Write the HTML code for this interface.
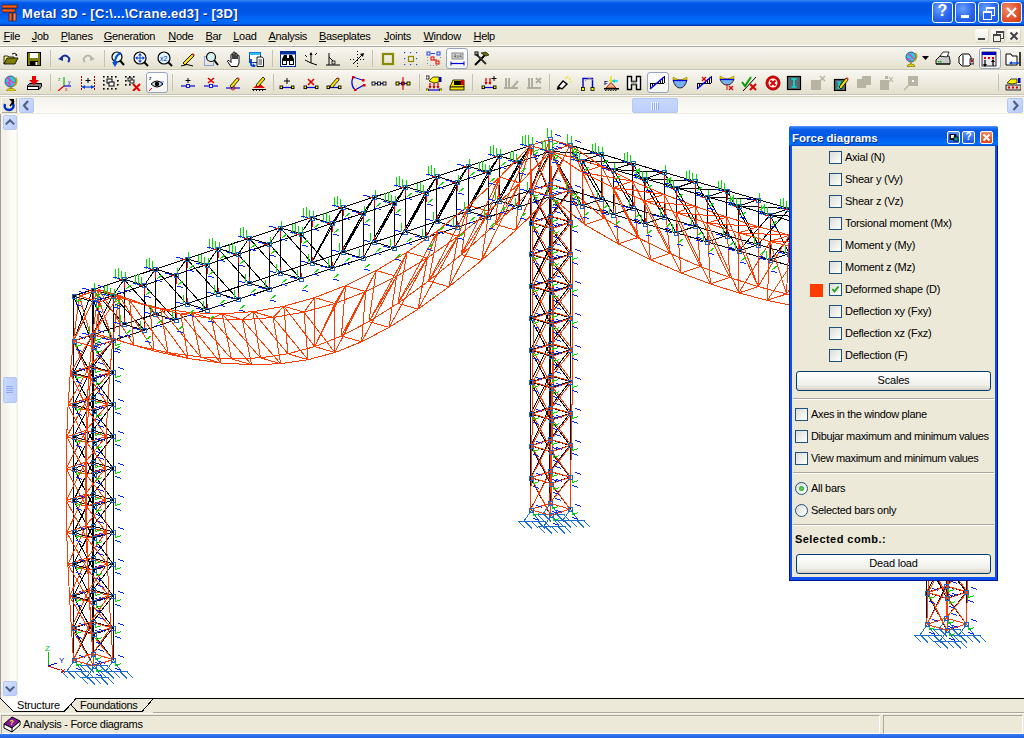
<!DOCTYPE html><html><head><meta charset="utf-8"><style>html,body{margin:0;padding:0;width:1024px;height:738px;overflow:hidden;background:#fff;position:relative}div,svg{box-sizing:content-box}</style></head><body><div style="position:absolute;left:0;top:0;width:1024px;height:26px;background:linear-gradient(#3d8af7 0px,#1a6ef2 1.5px,#0058e6 3px,#0054e3 8px,#0058e8 13px,#0062f2 17px,#006cfa 21px,#0064f2 23.5px,#0040c0 25px,#0030a0 26px)"></div><svg style="position:absolute;left:2px;top:4px" width="18" height="18" viewBox="0 0 18 18"><rect x="0" y="1" width="15" height="3" fill="#ff5a14" stroke="#2a1000" stroke-width="0.6"/><rect x="0" y="5" width="13" height="3" fill="#ff5a14" stroke="#2a1000" stroke-width="0.6"/><rect x="7" y="9" width="3" height="8" fill="#ff5a14" stroke="#2a1000" stroke-width="0.6"/><rect x="11" y="9" width="3" height="8" fill="#ff7a44" stroke="#2a1000" stroke-width="0.6"/></svg><div style="position:absolute;left:22px;top:6px;font:bold 13px 'Liberation Sans',sans-serif;letter-spacing:0.3px;color:#fff;text-shadow:1px 1px 0 #0a2a8a;white-space:nowrap">Metal 3D - [C:\...\Crane.ed3] - [3D]</div><div style="position:absolute;left:932px;top:2px;width:19px;height:19px;border:1px solid #fff;border-radius:3px;background:radial-gradient(circle at 35% 30%,#6aa0ff,#2a66ef 55%,#1a4fd8);overflow:hidden"><div style="position:absolute;left:0;top:-1px;width:19px;text-align:center;font:bold 16px 'Liberation Sans',sans-serif;color:#fff">?</div></div><div style="position:absolute;left:955px;top:2px;width:19px;height:19px;border:1px solid #fff;border-radius:3px;background:radial-gradient(circle at 35% 30%,#6aa0ff,#2a66ef 55%,#1a4fd8);overflow:hidden"><div style="position:absolute;left:5px;top:12px;width:8px;height:3px;background:#fff"></div></div><div style="position:absolute;left:978px;top:2px;width:19px;height:19px;border:1px solid #fff;border-radius:3px;background:radial-gradient(circle at 35% 30%,#6aa0ff,#2a66ef 55%,#1a4fd8);overflow:hidden"><div style="position:absolute;left:7px;top:4px;width:7px;height:6px;border:1px solid #fff;border-top-width:2px"></div><div style="position:absolute;left:4px;top:8px;width:7px;height:6px;border:1px solid #fff;border-top-width:2px;background:#2a66ef"></div></div><div style="position:absolute;left:1001px;top:2px;width:19px;height:19px;border:1px solid #fff;border-radius:3px;background:radial-gradient(circle at 30% 30%,#f08a6a,#e0502a 60%,#c83a10);overflow:hidden"><svg width="19" height="19" style="position:absolute;left:0;top:0"><path d="M5 5L14 14M14 5L5 14" stroke="#fff" stroke-width="2.2"/></svg></div><div style="position:absolute;left:0;top:26px;width:1024px;height:20px;background:#ece9d8"></div><div style="position:absolute;left:3.5px;top:30px;font:11px 'Liberation Sans',sans-serif;color:#000;white-space:nowrap;letter-spacing:-0.3px"><u style="text-decoration-thickness:1px;text-underline-offset:1px">F</u>ile</div><div style="position:absolute;left:31.75px;top:30px;font:11px 'Liberation Sans',sans-serif;color:#000;white-space:nowrap;letter-spacing:-0.3px"><u style="text-decoration-thickness:1px;text-underline-offset:1px">J</u>ob</div><div style="position:absolute;left:60.75px;top:30px;font:11px 'Liberation Sans',sans-serif;color:#000;white-space:nowrap;letter-spacing:-0.3px"><u style="text-decoration-thickness:1px;text-underline-offset:1px">P</u>lanes</div><div style="position:absolute;left:103.75px;top:30px;font:11px 'Liberation Sans',sans-serif;color:#000;white-space:nowrap;letter-spacing:-0.3px"><u style="text-decoration-thickness:1px;text-underline-offset:1px">G</u>eneration</div><div style="position:absolute;left:168.25px;top:30px;font:11px 'Liberation Sans',sans-serif;color:#000;white-space:nowrap;letter-spacing:-0.3px"><u style="text-decoration-thickness:1px;text-underline-offset:1px">N</u>ode</div><div style="position:absolute;left:205.5px;top:30px;font:11px 'Liberation Sans',sans-serif;color:#000;white-space:nowrap;letter-spacing:-0.3px"><u style="text-decoration-thickness:1px;text-underline-offset:1px">B</u>ar</div><div style="position:absolute;left:233.25px;top:30px;font:11px 'Liberation Sans',sans-serif;color:#000;white-space:nowrap;letter-spacing:-0.3px"><u style="text-decoration-thickness:1px;text-underline-offset:1px">L</u>oad</div><div style="position:absolute;left:268.5px;top:30px;font:11px 'Liberation Sans',sans-serif;color:#000;white-space:nowrap;letter-spacing:-0.3px"><u style="text-decoration-thickness:1px;text-underline-offset:1px">A</u>nalysis</div><div style="position:absolute;left:319px;top:30px;font:11px 'Liberation Sans',sans-serif;color:#000;white-space:nowrap;letter-spacing:-0.3px"><u style="text-decoration-thickness:1px;text-underline-offset:1px">B</u>aseplates</div><div style="position:absolute;left:384px;top:30px;font:11px 'Liberation Sans',sans-serif;color:#000;white-space:nowrap;letter-spacing:-0.3px"><u style="text-decoration-thickness:1px;text-underline-offset:1px">J</u>oints</div><div style="position:absolute;left:423.5px;top:30px;font:11px 'Liberation Sans',sans-serif;color:#000;white-space:nowrap;letter-spacing:-0.3px"><u style="text-decoration-thickness:1px;text-underline-offset:1px">W</u>indow</div><div style="position:absolute;left:473.5px;top:30px;font:11px 'Liberation Sans',sans-serif;color:#000;white-space:nowrap;letter-spacing:-0.3px"><u style="text-decoration-thickness:1px;text-underline-offset:1px">H</u>elp</div><div style="position:absolute;left:975px;top:29px;width:14px;height:14px;background:linear-gradient(#fdfdfb,#ece9dc);border-radius:2px;box-shadow:inset -1px -1px 0 #d8d4c4"><div style="position:absolute;left:3px;top:9px;width:7px;height:2px;background:#444"></div></div><div style="position:absolute;left:991px;top:29px;width:14px;height:14px;background:linear-gradient(#fdfdfb,#ece9dc);border-radius:2px;box-shadow:inset -1px -1px 0 #d8d4c4"><div style="position:absolute;left:5px;top:2px;width:6px;height:5px;border:1px solid #444;border-top-width:2px"></div><div style="position:absolute;left:2px;top:5px;width:6px;height:5px;border:1px solid #444;border-top-width:2px;background:#f2f0e8"></div></div><div style="position:absolute;left:1007px;top:29px;width:14px;height:14px;background:linear-gradient(#fdfdfb,#ece9dc);border-radius:2px;box-shadow:inset -1px -1px 0 #d8d4c4"><svg width="14" height="14" style="position:absolute;left:0;top:0"><path d="M3.5 3.5L10.5 10.5M10.5 3.5L3.5 10.5" stroke="#444" stroke-width="2"/></svg></div><div style="position:absolute;left:0;top:45px;width:1024px;height:1px;background:#fff"></div><div style="position:absolute;left:0;top:46px;width:1024px;height:1px;background:#aca899"></div><div style="position:absolute;left:0;top:47px;width:1024px;height:23px;background:linear-gradient(#f7f6f0,#ece9dc 60%,#e3dfcc)"></div><div style="position:absolute;left:0;top:71px;width:1024px;height:23px;background:linear-gradient(#f7f6f0,#ece9dc 60%,#e3dfcc)"></div><div style="position:absolute;left:0;top:69px;width:1024px;height:1px;background:#c9c5b4"></div><div style="position:absolute;left:0;top:70px;width:1024px;height:1px;background:#fbfaf6"></div><div style="position:absolute;left:0;top:94px;width:1024px;height:1px;background:#c9c5b4"></div><div style="position:absolute;left:0;top:95px;width:1024px;height:1px;background:#fbfaf6"></div><div style="position:absolute;left:0;top:96px;width:1024px;height:1px;background:#d6d2c2"></div><div style="position:absolute;left:446px;top:48px;width:20px;height:19px;border:1px solid #97a6be;border-radius:3px;background:linear-gradient(#ffffff,#f4f4f0)"></div><div style="position:absolute;left:979px;top:48px;width:20px;height:19px;border:1px solid #97a6be;border-radius:3px;background:linear-gradient(#ffffff,#f4f4f0)"></div><div style="position:absolute;left:146px;top:72px;width:20px;height:19px;border:1px solid #97a6be;border-radius:3px;background:linear-gradient(#ffffff,#f4f4f0)"></div><div style="position:absolute;left:647px;top:72px;width:20px;height:19px;border:1px solid #97a6be;border-radius:3px;background:linear-gradient(#ffffff,#f4f4f0)"></div><div style="position:absolute;left:50px;top:50px;width:1px;height:17px;background:#c5c2b2"></div><div style="position:absolute;left:104px;top:50px;width:1px;height:17px;background:#c5c2b2"></div><div style="position:absolute;left:272px;top:50px;width:1px;height:17px;background:#c5c2b2"></div><div style="position:absolute;left:372px;top:50px;width:1px;height:17px;background:#c5c2b2"></div><div style="position:absolute;left:50px;top:74px;width:1px;height:17px;background:#c5c2b2"></div><div style="position:absolute;left:172px;top:74px;width:1px;height:17px;background:#c5c2b2"></div><div style="position:absolute;left:273px;top:74px;width:1px;height:17px;background:#c5c2b2"></div><div style="position:absolute;left:419px;top:74px;width:1px;height:17px;background:#c5c2b2"></div><div style="position:absolute;left:472px;top:74px;width:1px;height:17px;background:#c5c2b2"></div><div style="position:absolute;left:549px;top:74px;width:1px;height:17px;background:#c5c2b2"></div><div style="position:absolute;left:998px;top:74px;width:1px;height:17px;background:#c5c2b2"></div><svg style="position:absolute;left:3px;top:51px" width="16" height="16" viewBox="0 0 16 16"><path d="M1 5h4l1 1h5v2H4L1 13z" fill="#f8f070" stroke="#000" stroke-width="0.8"/><path d="M1 13l3-6h11l-3 6z" fill="#808000" stroke="#000" stroke-width="0.8"/><path d="M9 3q3-2 5 1" stroke="#000" fill="none" stroke-width="1"/><path d="M13 2.5l1.5 2l-2 .5z" fill="#000"/></svg><svg style="position:absolute;left:26px;top:51px" width="16" height="16" viewBox="0 0 16 16"><rect x="1.5" y="1.5" width="13" height="13" fill="#808000" stroke="#000" stroke-width="1" /><rect x="4" y="2" width="8" height="5" fill="#fff" stroke="none" stroke-width="0" /><rect x="4" y="10" width="8" height="4.5" fill="#000" stroke="none" stroke-width="0" /><rect x="9.5" y="11" width="2" height="3" fill="#fff" stroke="none" stroke-width="0" /></svg><svg style="position:absolute;left:57px;top:51px" width="16" height="16" viewBox="0 0 16 16"><path d="M4 7q4-5 8 0q1 2-1 4" stroke="#1030a0" stroke-width="2" fill="none"/><path d="M1 8l5-3l0 5z" fill="#1030a0"/></svg><svg style="position:absolute;left:80px;top:51px" width="16" height="16" viewBox="0 0 16 16"><path d="M12 7q-4-5-8 0q-1 2 1 4" stroke="#b8b6aa" stroke-width="2" fill="none"/><path d="M15 8l-5-3l0 5z" fill="#b8b6aa"/></svg><svg style="position:absolute;left:109px;top:51px" width="16" height="16" viewBox="0 0 16 16"><circle cx="8" cy="6" r="5" fill="#e8f8f8" stroke="#000" stroke-width="1.2"/><path d="M11 9.5L15 14" stroke="#000" stroke-width="2" /><path d="M12 2q-6 2-6 10" stroke="#0050e0" stroke-width="2" fill="none"/><path d="M3 11l3 5l3-5z" fill="#0050e0"/></svg><svg style="position:absolute;left:133px;top:51px" width="16" height="16" viewBox="0 0 16 16"><circle cx="7" cy="7" r="6" fill="#fff" stroke="#000" stroke-width="1.2"/><path d="M11 11L15 15" stroke="#000" stroke-width="2" /><path d="M7 2l2 2.5h-4zM7 12l2-2.5h-4zM2 7l2.5-2v4zM12 7l-2.5-2v4z" fill="#0040e0"/><path d="M7 4L7 10" stroke="#0040e0" stroke-width="1" /><path d="M4 7L10 7" stroke="#0040e0" stroke-width="1" /></svg><svg style="position:absolute;left:157px;top:51px" width="16" height="16" viewBox="0 0 16 16"><circle cx="7" cy="7" r="6" fill="#e0f4ff" stroke="#000" stroke-width="1.2"/><path d="M11 11L15 15" stroke="#000" stroke-width="2" /><text x="3" y="10" font-size="7" font-family="Liberation Sans" fill="#0030c0">x2</text></svg><svg style="position:absolute;left:180px;top:51px" width="16" height="16" viewBox="0 0 16 16"><path d="M3 12L12 3l2 2l-9 9z" fill="#f8e000" stroke="#000" stroke-width="0.9"/><path d="M12 3l2 2l1-1l-2-2z" fill="#e04040"/><path d="M1 15q6-3 12 0" stroke="#000" fill="none" stroke-width="1"/></svg><svg style="position:absolute;left:203px;top:51px" width="16" height="16" viewBox="0 0 16 16"><rect x="1.5" y="5.5" width="9" height="9" fill="none" stroke="#2060e0" stroke-width="1" stroke-dasharray="1,1"/><circle cx="8" cy="6" r="4.5" fill="#d8f0f0" stroke="#000" stroke-width="1.2"/><path d="M11 9L15 14" stroke="#000" stroke-width="2" /></svg><svg style="position:absolute;left:226px;top:51px" width="16" height="16" viewBox="0 0 16 16"><path d="M5 15.5L1.5 10.5q0-1.5 1.5-1L5 11.5V4q0-1 1-1t1 1v4V2q0-1 1-1t1 1v6V3q0-1 1-1t1 1v5V5q0-1 1-1t1 1v7l-1.5 3.5z" fill="#fff" stroke="#000" stroke-width="1" stroke-linejoin="round"/></svg><svg style="position:absolute;left:248px;top:51px" width="16" height="16" viewBox="0 0 16 16"><rect x="1.5" y="1.5" width="11" height="10" fill="#fff" stroke="#0040c0" stroke-width="1" /><rect x="1.5" y="1.5" width="11" height="2.5" fill="#30c0f0" stroke="none" stroke-width="0" /><path d="M9 6h5l1.5 1.5v8h-6.5z" fill="#fff" stroke="#000" stroke-width="0.9"/><path d="M10.5 9h3.5M10.5 11h3.5M10.5 13h3.5" stroke="#000" stroke-width="0.8"/><path d="M3 8v5q0 2 3 2" stroke="#0040d0" stroke-width="1.8" fill="none"/><path d="M5 12.5l3 2.5l-3 2z" fill="#0040d0"/></svg><svg style="position:absolute;left:280px;top:51px" width="16" height="16" viewBox="0 0 16 16"><rect x="0.5" y="0.5" width="15" height="15" fill="#fff" stroke="#0030a0" stroke-width="1" /><rect x="0.5" y="0.5" width="15" height="3" fill="#0030a0" stroke="none" stroke-width="0" /><path d="M2 14V8l2-4h3v10zM14 14V8l-2-4H9v10z" fill="#000"/><rect x="3" y="10" width="3" height="3" fill="#fff" stroke="none" stroke-width="0" /><rect x="10" y="10" width="3" height="3" fill="#fff" stroke="none" stroke-width="0" /><rect x="7" y="7" width="2" height="3" fill="#000" stroke="none" stroke-width="0" /></svg><svg style="position:absolute;left:303px;top:51px" width="16" height="16" viewBox="0 0 16 16"><path d="M8 2L8 12" stroke="#000" stroke-width="1" /><path d="M8 12L14 14" stroke="#000" stroke-width="1" /><path d="M8 12L2 9" stroke="#000" stroke-width="1" /><path d="M8 1l-1.5 3h3z" fill="#000"/><path d="M2 4L4 6" stroke="#000" stroke-width="1" /><path d="M12 4L14 2" stroke="#000" stroke-width="1" /></svg><svg style="position:absolute;left:325px;top:51px" width="16" height="16" viewBox="0 0 16 16"><path d="M4 2L4 14" stroke="#000" stroke-width="1" /><path d="M1 14L15 14" stroke="#000" stroke-width="1" /><path d="M4 6L8 10" stroke="#000" stroke-width="1" /><rect x="7" y="10" width="3" height="3" fill="none" stroke="#000" stroke-width="0.8" /></svg><svg style="position:absolute;left:349.5px;top:51px" width="16" height="16" viewBox="0 0 16 16"><path d="M3 13L13 3" stroke="#000" stroke-width="1" /><path d="M14 2l-4 1l3 3z" fill="#000"/><rect x="7" y="0" width="1" height="1" fill="#000"/><rect x="7" y="3" width="1" height="1" fill="#000"/><rect x="7" y="6" width="1" height="1" fill="#000"/><rect x="7" y="9" width="1" height="1" fill="#000"/><rect x="7" y="12" width="1" height="1" fill="#000"/><rect x="7" y="15" width="1" height="1" fill="#000"/><rect x="0" y="8" width="1" height="1" fill="#000"/><rect x="3" y="8" width="1" height="1" fill="#000"/><rect x="10" y="8" width="1" height="1" fill="#000"/><rect x="13" y="8" width="1" height="1" fill="#000"/></svg><svg style="position:absolute;left:380px;top:51px" width="16" height="16" viewBox="0 0 16 16"><rect x="3" y="3" width="10" height="10" fill="none" stroke="#8a8a00" stroke-width="2.2" /></svg><svg style="position:absolute;left:403px;top:51px" width="16" height="16" viewBox="0 0 16 16"><rect x="5.5" y="5.5" width="5" height="5" fill="none" stroke="#8a8a00" stroke-width="1.2" /><rect x="1" y="1" width="1.2" height="1.2" fill="#2050d0"/><rect x="7" y="1" width="1.2" height="1.2" fill="#2050d0"/><rect x="13" y="1" width="1.2" height="1.2" fill="#2050d0"/><rect x="1" y="7" width="1.2" height="1.2" fill="#2050d0"/><rect x="13" y="7" width="1.2" height="1.2" fill="#2050d0"/><rect x="1" y="13" width="1.2" height="1.2" fill="#2050d0"/><rect x="7" y="13" width="1.2" height="1.2" fill="#2050d0"/><rect x="13" y="13" width="1.2" height="1.2" fill="#2050d0"/></svg><svg style="position:absolute;left:426px;top:51px" width="16" height="16" viewBox="0 0 16 16"><rect x="1" y="1" width="3" height="3" fill="none" stroke="#2040e0" stroke-width="1" /><path d="M5 2.5L9 2.5" stroke="#2040e0" stroke-width="1" /><rect x="11" y="1" width="3" height="3" fill="none" stroke="#2040e0" stroke-width="1" /><rect x="5" y="6" width="3" height="3" fill="none" stroke="#e00000" stroke-width="1" /><path d="M8 9L11 9" stroke="#e00000" stroke-width="1" /><rect x="10" y="10" width="3" height="3" fill="none" stroke="#e00000" stroke-width="1" /><rect x="1" y="6" width="1" height="1" fill="#888"/><rect x="1" y="9" width="1" height="1" fill="#888"/><rect x="1" y="12" width="1" height="1" fill="#888"/><rect x="4" y="14" width="1" height="1" fill="#888"/><rect x="7" y="14" width="1" height="1" fill="#888"/><rect x="10" y="14" width="1" height="1" fill="#888"/><rect x="14" y="6" width="1" height="1" fill="#888"/></svg><svg style="position:absolute;left:449px;top:51px" width="16" height="16" viewBox="0 0 16 16"><rect x="3" y="2" width="11" height="6" fill="#d8d8d8" stroke="#888" stroke-width="1" /><text x="4.5" y="7" font-size="4.5" font-family="Liberation Mono" fill="#333">4x4</text><path d="M2 12.5L15 12.5" stroke="#0000d0" stroke-width="1.2" /><path d="M2 10.5L2 14.5" stroke="#0000d0" stroke-width="1" /><path d="M15 10.5L15 14.5" stroke="#0000d0" stroke-width="1" /></svg><svg style="position:absolute;left:473px;top:51px" width="16" height="16" viewBox="0 0 16 16"><path d="M2 14L12 4" stroke="#000" stroke-width="2" /><path d="M8 2l5-1l3 3l-3 1z" fill="#707000" stroke="#000" stroke-width="0.6"/><path d="M3 3L13 13" stroke="#303030" stroke-width="2" /><rect x="2" y="1" width="3" height="3" fill="none" stroke="#000" stroke-width="1" /></svg><svg style="position:absolute;left:904px;top:51px" width="16" height="16" viewBox="0 0 16 16"><circle cx="7" cy="6" r="5" fill="#30c8d8" stroke="#204080" stroke-width="0.8"/><path d="M4 3q3 1 4 3t3 2M3 8q2-1 4 2" stroke="#e040c0" stroke-width="1.5" fill="none"/><path d="M11.5 2q3 4-1 8" stroke="#c0a800" stroke-width="1.5" fill="none"/><path d="M7 11L7 13" stroke="#a09000" stroke-width="1.5" /><path d="M3 15.5q0-2.5 4-2.5t4 2.5z" fill="#e8d800" stroke="#706000" stroke-width="0.6"/></svg><svg style="position:absolute;left:935px;top:51px" width="16" height="16" viewBox="0 0 16 16"><path d="M1 9l4-4h9l1 4v4H1z" fill="#c8c8c8" stroke="#000" stroke-width="0.9"/><path d="M5 5l3-4h6l-2 5z" fill="#fff" stroke="#000" stroke-width="0.8"/><rect x="3" y="10" width="1.5" height="1.5" fill="#00c000"/><rect x="5" y="10" width="1.5" height="1.5" fill="#00c000"/><path d="M1 13L15 13" stroke="#000" stroke-width="1" /></svg><svg style="position:absolute;left:957.5px;top:51px" width="16" height="16" viewBox="0 0 16 16"><path d="M1 6l3-3h7l2 3v7l-2 2H4l-3-3z" fill="#fff" stroke="#000" stroke-width="1"/><rect x="12" y="8" width="4" height="5" fill="#c0c0c0" stroke="#000" stroke-width="0.8" /><path d="M5 4L5 14" stroke="#000" stroke-width="1" /><rect x="13" y="9" width="2" height="2" fill="#e00000" stroke="none" stroke-width="0" /></svg><svg style="position:absolute;left:981px;top:51px" width="16" height="16" viewBox="0 0 16 16"><rect x="1" y="1" width="14" height="14" fill="#e8e8f0" stroke="#000" stroke-width="0.8" /><rect x="1" y="1" width="14" height="3" fill="#0000c0" stroke="none" stroke-width="0" /><rect x="3" y="6" width="2" height="2" fill="#e00000"/><rect x="7" y="6" width="2" height="2" fill="#e00000"/><rect x="11" y="6" width="2" height="2" fill="#e00000"/><path d="M4 9v6M12 9v6" stroke="#000" stroke-width="1.2"/><path d="M2 13l2 3l2-3zM10 11l2-3l2 3z" fill="#000"/></svg><svg style="position:absolute;left:1005px;top:51px" width="16" height="16" viewBox="0 0 16 16"><path d="M1 3h5l1 2h5v9H1z" fill="#fff" stroke="#000" stroke-width="1"/><path d="M15 1L15 15" stroke="#000" stroke-width="1.5" /><path d="M5 12L14 12" stroke="#0040e0" stroke-width="1.3" /><path d="M4 12l3-2v4z" fill="#0040e0"/></svg><svg style="position:absolute;left:3px;top:74.5px" width="16" height="16" viewBox="0 0 16 16"><circle cx="7.5" cy="6.5" r="5.5" fill="#30c8d8" stroke="#204080" stroke-width="0.8"/><path d="M4 3q3 1 4 3t4 2M3 8q2-1 5 2M6 2q1 4 0 9" stroke="#e040c0" stroke-width="1.6" fill="none"/><path d="M12.5 2.5q3 4-1 8.5" stroke="#c0a800" stroke-width="1.6" fill="none"/><path d="M8 12L8 14" stroke="#a09000" stroke-width="1.6" /><path d="M3.5 16q0-2.5 4.5-2.5t4.5 2.5z" fill="#e8d800" stroke="#706000" stroke-width="0.6"/></svg><svg style="position:absolute;left:26px;top:74.5px" width="16" height="16" viewBox="0 0 16 16"><path d="M1.5 10.5l2-2h12v3l-2 2.5h-12z" fill="#808080" stroke="#000" stroke-width="1"/><rect x="1.5" y="11.5" width="11" height="3" fill="#fff" stroke="#000" stroke-width="1" /><path d="M6 1h4v4h3l-5 5l-5-5h3z" fill="#f00000"/></svg><svg style="position:absolute;left:57px;top:74.5px" width="16" height="16" viewBox="0 0 16 16"><path d="M7 2L7 11" stroke="#00c000" stroke-width="1.2" /><path d="M7 11L14 11" stroke="#0000e0" stroke-width="1.2" /><path d="M7 11L1 16" stroke="#e00000" stroke-width="1.2" /><text x="1" y="6" font-size="5" fill="#00c000" font-family="Liberation Sans">z</text><text x="11" y="9" font-size="5" fill="#0000e0" font-family="Liberation Sans">y</text><text x="8" y="16" font-size="5" fill="#e00000" font-family="Liberation Sans">x</text></svg><svg style="position:absolute;left:80px;top:74.5px" width="16" height="16" viewBox="0 0 16 16"><path d="M1.5 1L1.5 16" stroke="#a00000" stroke-width="1" stroke-dasharray="2,1"/><path d="M14.5 1L14.5 16" stroke="#a00000" stroke-width="1" stroke-dasharray="2,1"/><path d="M2 12L14 12" stroke="#0040e0" stroke-width="1.2" /><path d="M2 12l3-2v4zM14 12l-3-2v4z" fill="#0040e0"/><path d="M8 3L8 8" stroke="#000" stroke-width="1" /><path d="M5.5 5.5L10.5 5.5" stroke="#000" stroke-width="1" /></svg><svg style="position:absolute;left:103px;top:74.5px" width="16" height="16" viewBox="0 0 16 16"><rect x="0" y="1" width="1.6" height="1.6" fill="#000"/><rect x="4" y="1" width="1.6" height="1.6" fill="#000"/><rect x="8" y="1" width="1.6" height="1.6" fill="#000"/><rect x="12" y="1" width="1.6" height="1.6" fill="#000"/><rect x="0" y="5" width="1.6" height="1.6" fill="#000"/><rect x="0" y="9" width="1.6" height="1.6" fill="#000"/><rect x="0" y="13" width="1.6" height="1.6" fill="#000"/><rect x="4" y="13" width="1.6" height="1.6" fill="#000"/><rect x="8" y="13" width="1.6" height="1.6" fill="#000"/><rect x="12" y="13" width="1.6" height="1.6" fill="#000"/><rect x="14" y="5" width="1.6" height="1.6" fill="#000"/><rect x="14" y="9" width="1.6" height="1.6" fill="#000"/><rect x="4" y="4" width="5" height="4" fill="#fff" stroke="#000" stroke-width="1" /><rect x="6" y="7" width="5" height="4" fill="#fff" stroke="#000" stroke-width="1" /></svg><svg style="position:absolute;left:125px;top:74.5px" width="16" height="16" viewBox="0 0 16 16"><rect x="0" y="1" width="1.6" height="1.6" fill="#000"/><rect x="4" y="1" width="1.6" height="1.6" fill="#000"/><rect x="8" y="1" width="1.6" height="1.6" fill="#000"/><rect x="0" y="5" width="1.6" height="1.6" fill="#000"/><rect x="0" y="9" width="1.6" height="1.6" fill="#000"/><rect x="4" y="9" width="1.6" height="1.6" fill="#000"/><rect x="3" y="3" width="4" height="3" fill="#fff" stroke="#000" stroke-width="0.9" /><rect x="5" y="5" width="4" height="3" fill="#fff" stroke="#000" stroke-width="0.9" /><path d="M8 9L15 16" stroke="#e00000" stroke-width="2" /><path d="M15 9L8 16" stroke="#e00000" stroke-width="2" /></svg><svg style="position:absolute;left:149px;top:74.5px" width="16" height="16" viewBox="0 0 16 16"><path d="M2 9q6-6 12 0q-6 6-12 0z" fill="#c0e0e0" stroke="#000" stroke-width="1"/><circle cx="8" cy="9" r="2.2" fill="#000"/><text x="0" y="5" font-size="5" font-family="Liberation Sans" fill="#000">z</text><text x="12" y="9" font-size="5" font-family="Liberation Sans" fill="#0000e0">y</text><path d="M3 13L0 16" stroke="#e00000" stroke-width="1" /></svg><svg style="position:absolute;left:180px;top:74.5px" width="16" height="16" viewBox="0 0 16 16"><path d="M1 11L15 11" stroke="#0000e0" stroke-width="1.2" /><rect x="6.5" y="9.5" width="3" height="3" fill="#fff" stroke="#0000e0" stroke-width="0.9" /><path d="M8 3L8 8" stroke="#000" stroke-width="1" /><path d="M5.5 5.5L10.5 5.5" stroke="#000" stroke-width="1" /></svg><svg style="position:absolute;left:203px;top:74.5px" width="16" height="16" viewBox="0 0 16 16"><path d="M1 11L15 11" stroke="#0000e0" stroke-width="1.2" /><rect x="6.5" y="9.5" width="3" height="3" fill="#fff" stroke="#0000e0" stroke-width="0.9" /><path d="M5 3L11 8" stroke="#e00000" stroke-width="1.6" /><path d="M11 3L5 8" stroke="#e00000" stroke-width="1.6" /></svg><svg style="position:absolute;left:225px;top:74.5px" width="16" height="16" viewBox="0 0 16 16"><path d="M1 13L15 13" stroke="#0000e0" stroke-width="1.2" /><circle cx="8" cy="13" r="2" fill="none" stroke="#e00000"/><path d="M5 11l7-8l2 2l-7 8z" fill="#f8e000" stroke="#000" stroke-width="0.8"/><path d="M12 3l2 2l1-1l-2-2z" fill="#e04040"/></svg><svg style="position:absolute;left:251px;top:74.5px" width="16" height="16" viewBox="0 0 16 16"><path d="M2 13l6-5l6 5z" fill="#f00000"/><path d="M1 14.5L15 14.5" stroke="#000" stroke-width="1" /><path d="M5 10l7-8l2 2l-7 8z" fill="#f8e000" stroke="#000" stroke-width="0.8"/><rect x="2" y="15" width="1" height="1" fill="#000"/><rect x="5" y="15" width="1" height="1" fill="#000"/><rect x="8" y="15" width="1" height="1" fill="#000"/><rect x="11" y="15" width="1" height="1" fill="#000"/></svg><svg style="position:absolute;left:279px;top:74.5px" width="16" height="16" viewBox="0 0 16 16"><path d="M2 12.5L14 12.5" stroke="#0000e0" stroke-width="1.2" /><rect x="1" y="11" width="2.6" height="2.6" fill="#ff0" stroke="#000" stroke-width="0.9" /><rect x="12.4" y="11" width="2.6" height="2.6" fill="#ff0" stroke="#000" stroke-width="0.9" /><path d="M8 3L8 9" stroke="#000" stroke-width="1" /><path d="M5 6L11 6" stroke="#000" stroke-width="1" /></svg><svg style="position:absolute;left:303px;top:74.5px" width="16" height="16" viewBox="0 0 16 16"><path d="M2 12.5L14 12.5" stroke="#0000e0" stroke-width="1.2" /><rect x="1" y="11" width="2.6" height="2.6" fill="#ff0" stroke="#000" stroke-width="0.9" /><rect x="12.4" y="11" width="2.6" height="2.6" fill="#ff0" stroke="#000" stroke-width="0.9" /><path d="M5 4L11 10" stroke="#e00000" stroke-width="1.6" /><path d="M11 4L5 10" stroke="#e00000" stroke-width="1.6" /></svg><svg style="position:absolute;left:326px;top:74.5px" width="16" height="16" viewBox="0 0 16 16"><path d="M2 12.5L14 12.5" stroke="#0000e0" stroke-width="1.2" /><rect x="1" y="11" width="2.6" height="2.6" fill="#ff0" stroke="#000" stroke-width="0.9" /><rect x="12.4" y="11" width="2.6" height="2.6" fill="#ff0" stroke="#000" stroke-width="0.9" /><path d="M4 11l7-8l2 2l-7 8z" fill="#f8e000" stroke="#000" stroke-width="0.8"/><path d="M11 3l2 2l1-1l-2-2z" fill="#e04040"/></svg><svg style="position:absolute;left:349.5px;top:74.5px" width="16" height="16" viewBox="0 0 16 16"><path d="M3 2q-3 8 2 13" stroke="#0000e0" fill="none" stroke-width="1.2"/><path d="M5 15L14 10" stroke="#0000e0" stroke-width="1.2" /><path d="M3 2L12 5" stroke="#0000e0" stroke-width="1" /><rect x="2" y="1" width="2.5" height="2.5" fill="#e00000" stroke="none" stroke-width="0" /><rect x="12" y="4" width="2.5" height="2.5" fill="#e00000" stroke="none" stroke-width="0" /><rect x="4" y="14" width="2.5" height="2.5" fill="#e00000" stroke="none" stroke-width="0" /><rect x="13" y="9" width="2.5" height="2.5" fill="#e00000" stroke="none" stroke-width="0" /></svg><svg style="position:absolute;left:371px;top:74.5px" width="16" height="16" viewBox="0 0 16 16"><path d="M1 8.5L15 8.5" stroke="#0000e0" stroke-width="1.2" /><rect x="1" y="7" width="3" height="3" fill="#fff" stroke="#000" stroke-width="0.9" /><rect x="6.5" y="7" width="3" height="3" fill="#fff" stroke="#000" stroke-width="0.9" /><rect x="12" y="7" width="3" height="3" fill="#fff" stroke="#000" stroke-width="0.9" /></svg><svg style="position:absolute;left:395px;top:74.5px" width="16" height="16" viewBox="0 0 16 16"><path d="M1 8.5L15 8.5" stroke="#0000e0" stroke-width="1.2" /><path d="M8 2L8 15" stroke="#e00000" stroke-width="1.2" /><rect x="1" y="7" width="3" height="3" fill="#ff0" stroke="#000" stroke-width="0.9" /><rect x="12" y="7" width="3" height="3" fill="#ff0" stroke="#000" stroke-width="0.9" /><rect x="6.5" y="7" width="3" height="3" fill="#e00000" stroke="#000" stroke-width="0.6" /></svg><svg style="position:absolute;left:426px;top:74.5px" width="16" height="16" viewBox="0 0 16 16"><path d="M3 6l4-4h6v5l-5 1z" fill="#f8f000" stroke="#000" stroke-width="0.7"/><rect x="13" y="2" width="2.5" height="5" fill="#0000c0" stroke="none" stroke-width="0" /><path d="M1 15L15 15" stroke="#0000e0" stroke-width="1.2" /><path d="M4 8v5M8 8v5M12 8v5" stroke="#e00000" stroke-width="1.3"/><path d="M2.5 11l1.5 3l1.5-3zM6.5 11l1.5 3l1.5-3zM10.5 11l1.5 3l1.5-3z" fill="#e00000"/><rect x="0" y="14" width="2.5" height="2.5" fill="#ff0" stroke="#000" stroke-width="0.7" /><rect x="13.5" y="14" width="2.5" height="2.5" fill="#ff0" stroke="#000" stroke-width="0.7" /><rect x="0" y="1" width="3" height="3" fill="#fff" stroke="#000" stroke-width="0.8" /></svg><svg style="position:absolute;left:449px;top:74.5px" width="16" height="16" viewBox="0 0 16 16"><path d="M1 12l3-7h11v7z" fill="#f0e000" stroke="#000" stroke-width="0.8"/><rect x="1" y="12" width="14" height="3" fill="#f0e000" stroke="#000" stroke-width="0.8" /><rect x="5" y="6" width="9" height="4" fill="#000" stroke="none" stroke-width="0" /><rect x="12" y="5" width="3" height="5" fill="#e00000" stroke="none" stroke-width="0" /></svg><svg style="position:absolute;left:481px;top:74.5px" width="16" height="16" viewBox="0 0 16 16"><path d="M2 12.5L14 12.5" stroke="#0000e0" stroke-width="1.2" /><rect x="1" y="11" width="2.6" height="2.6" fill="#ff0" stroke="#000" stroke-width="0.9" /><rect x="12.4" y="11" width="2.6" height="2.6" fill="#ff0" stroke="#000" stroke-width="0.9" /><path d="M5 3v6M9 3v6" stroke="#e00000" stroke-width="1.3"/><path d="M3.5 7l1.5 3l1.5-3zM7.5 7l1.5 3l1.5-3z" fill="#e00000"/><path d="M13 1L13 6" stroke="#000" stroke-width="1" /><path d="M10.5 3.5L15.5 3.5" stroke="#000" stroke-width="1" /></svg><svg style="position:absolute;left:503px;top:74.5px" width="16" height="16" viewBox="0 0 16 16"><path d="M1 13h14M3 13V3M6 13V3M9 13l6-7" stroke="#b0ae9f" stroke-width="2" fill="none"/></svg><svg style="position:absolute;left:526px;top:74.5px" width="16" height="16" viewBox="0 0 16 16"><path d="M1 13h14M3 13V3M6 13V3M10 3l5 5M15 3l-5 5" stroke="#b0ae9f" stroke-width="2" fill="none"/></svg><svg style="position:absolute;left:556px;top:74.5px" width="16" height="16" viewBox="0 0 16 16"><path d="M2 12l5-6l4 3l-5 5z" fill="#fff" stroke="#000" stroke-width="1.4"/><path d="M1 14L4 13" stroke="#000" stroke-width="2" /><rect x="11" y="1" width="1.5" height="1.5" fill="#f0e000"/><rect x="13" y="3" width="1.5" height="1.5" fill="#f0e000"/><rect x="14" y="6" width="1.5" height="1.5" fill="#f0e000"/><rect x="9" y="2" width="1.5" height="1.5" fill="#f0e000"/></svg><svg style="position:absolute;left:579.5px;top:74.5px" width="16" height="16" viewBox="0 0 16 16"><path d="M3 14V3.5h9.5V14" stroke="#0000d0" stroke-width="1.4" fill="none"/><path d="M5 6q4-4 8-1" stroke="#999" fill="none"/><rect x="1.5" y="12.5" width="3" height="3" fill="#ff0" stroke="#000" stroke-width="0.8" /><rect x="11" y="12.5" width="3" height="3" fill="#ff0" stroke="#000" stroke-width="0.8" /></svg><svg style="position:absolute;left:603px;top:74.5px" width="16" height="16" viewBox="0 0 16 16"><path d="M3 13l5-5.5l5 5.5z" fill="#f0b080" stroke="#800000" stroke-width="0.8"/><rect x="1" y="13" width="15" height="1.5" fill="#000" stroke="none" stroke-width="0" /><path d="M2.0 16L4.0 14.5" stroke="#000" stroke-width="0.9" /><path d="M4.5 16L6.5 14.5" stroke="#000" stroke-width="0.9" /><path d="M7.0 16L9.0 14.5" stroke="#000" stroke-width="0.9" /><path d="M9.5 16L11.5 14.5" stroke="#000" stroke-width="0.9" /><path d="M12.0 16L14.0 14.5" stroke="#000" stroke-width="0.9" /><path d="M9 6L15 6" stroke="#00d0f0" stroke-width="1.4" /><path d="M9 6l3-2v4z" fill="#00d0f0"/><path d="M8 1v5" stroke="#f0e000" stroke-width="1.5"/><path d="M6 5l2 3l2-3z" fill="#f0e000"/><text x="1" y="10" font-size="6" font-weight="bold" font-family="Liberation Sans" fill="#000080">F</text></svg><svg style="position:absolute;left:626px;top:74.5px" width="16" height="16" viewBox="0 0 16 16"><path d="M1.5 1.5h4v5h5v-5h4v13h-4v-5h-5v5h-4z" fill="#fff" stroke="#000" stroke-width="1.4"/><rect x="5.5" y="6.5" width="5" height="3" fill="#a0a0a0" stroke="none" stroke-width="0" /></svg><svg style="position:absolute;left:649px;top:74.5px" width="16" height="16" viewBox="0 0 16 16"><path d="M1.5 8L1.5 13.16" stroke="#000" stroke-width="1" /><path d="M3.5 8L3.5 11.44" stroke="#000" stroke-width="1" /><path d="M5.5 8L5.5 9.72" stroke="#000" stroke-width="1" /><path d="M7.5 8L7.5 8.0" stroke="#000" stroke-width="1" /><path d="M9.5 8L9.5 6.28" stroke="#000" stroke-width="1" /><path d="M11.5 8L11.5 4.5600000000000005" stroke="#000" stroke-width="1" /><path d="M13.5 8L13.5 2.84" stroke="#000" stroke-width="1" /><path d="M15.5 8L15.5 1.12" stroke="#000" stroke-width="1" /><path d="M1 8.5L15 8.5" stroke="#000" stroke-width="1" /><path d="M1 14L15 2" stroke="#0000e0" stroke-width="1.4" /></svg><svg style="position:absolute;left:672px;top:74.5px" width="16" height="16" viewBox="0 0 16 16"><path d="M1 5h14q-2 8-7 8t-7-8z" fill="#78b0f0" stroke="#000" stroke-width="0.8"/><path d="M1 2l6 3H1zM15 2l-6 3h6z" fill="#f0e000" stroke="#806000" stroke-width="0.5"/><path d="M1 5.5L15 5.5" stroke="#0000e0" stroke-width="1.2" /></svg><svg style="position:absolute;left:696px;top:74.5px" width="16" height="16" viewBox="0 0 16 16"><path d="M1.5 8L1.5 13.16" stroke="#000" stroke-width="1" /><path d="M3.5 8L3.5 11.44" stroke="#000" stroke-width="1" /><path d="M5.5 8L5.5 9.72" stroke="#000" stroke-width="1" /><path d="M7.5 8L7.5 8.0" stroke="#000" stroke-width="1" /><path d="M9.5 8L9.5 6.28" stroke="#000" stroke-width="1" /><path d="M11.5 8L11.5 4.5600000000000005" stroke="#000" stroke-width="1" /><path d="M13.5 8L13.5 2.84" stroke="#000" stroke-width="1" /><path d="M15.5 8L15.5 1.12" stroke="#000" stroke-width="1" /><path d="M1 8.5L15 8.5" stroke="#000" stroke-width="1" /><path d="M1 14L15 2" stroke="#0000e0" stroke-width="1.4" /><path d="M6 2L10 6" stroke="#e00000" stroke-width="1.3" /><path d="M10 2L6 6" stroke="#e00000" stroke-width="1.3" /></svg><svg style="position:absolute;left:719px;top:74.5px" width="16" height="16" viewBox="0 0 16 16"><path d="M1 4h14q-2 6-7 6t-7-6z" fill="#78b0f0" stroke="#000" stroke-width="0.8"/><path d="M1 1l6 3H1zM15 1l-6 3h6z" fill="#f0e000" stroke="#806000" stroke-width="0.5"/><path d="M1 4.5L15 4.5" stroke="#0000e0" stroke-width="1.2" /><path d="M8 9L8 15" stroke="#e00000" stroke-width="1" /><path d="M10 11L14 15" stroke="#e00000" stroke-width="1.2" /><path d="M14 11L10 15" stroke="#e00000" stroke-width="1.2" /></svg><svg style="position:absolute;left:741px;top:74.5px" width="16" height="16" viewBox="0 0 16 16"><path d="M1 7l3 4l6-9" stroke="#00a000" stroke-width="2" fill="none"/><path d="M2 16L15 2" stroke="#000" stroke-width="1" /><path d="M9 9L15 15" stroke="#e00000" stroke-width="2" /><path d="M15 9L9 15" stroke="#e00000" stroke-width="2" /></svg><svg style="position:absolute;left:764.5px;top:74.5px" width="16" height="16" viewBox="0 0 16 16"><circle cx="8" cy="8" r="7" fill="#e00000" stroke="#a00000" stroke-width="1"/><circle cx="8" cy="8" r="4.5" fill="#fff"/><path d="M5.5 5.5l5 5M10.5 5.5l-5 5" stroke="#e00000" stroke-width="2"/></svg><svg style="position:absolute;left:786px;top:74.5px" width="16" height="16" viewBox="0 0 16 16"><rect x="1.5" y="1.5" width="13" height="13" fill="#5a6a6a" stroke="#000" stroke-width="1.2" /><path d="M8 4L8 12" stroke="#00e8e8" stroke-width="1.6" /><path d="M5.5 4L10.5 4" stroke="#00e8e8" stroke-width="1.4" /><path d="M5.5 12L10.5 12" stroke="#00e8e8" stroke-width="1.4" /></svg><svg style="position:absolute;left:810px;top:74.5px" width="16" height="16" viewBox="0 0 16 16"><rect x="1" y="5" width="10" height="10" fill="#b8b4a4" stroke="none" stroke-width="0" /><path d="M10 1L15 6" stroke="#b8b4a4" stroke-width="1.5" /><path d="M15 1L10 6" stroke="#b8b4a4" stroke-width="1.5" /></svg><svg style="position:absolute;left:832.5px;top:74.5px" width="16" height="16" viewBox="0 0 16 16"><rect x="1.5" y="4.5" width="11" height="11" fill="#5a6a6a" stroke="#000" stroke-width="1.2" /><path d="M6 7L6 13" stroke="#00e8e8" stroke-width="1.5" /><path d="M4 7L8 7" stroke="#00e8e8" stroke-width="1.2" /><path d="M4 13L8 13" stroke="#00e8e8" stroke-width="1.2" /><path d="M6 12l7-9l2 2l-7 9z" fill="#f8e000" stroke="#000" stroke-width="0.8"/><path d="M13 3l2 2l1-1l-2-2z" fill="#e04040"/></svg><svg style="position:absolute;left:856px;top:74.5px" width="16" height="16" viewBox="0 0 16 16"><rect x="1" y="4" width="9" height="9" fill="#b8b4a4" stroke="none" stroke-width="0" /><rect x="6" y="1" width="9" height="9" fill="#b8b4a4" stroke="none" stroke-width="0" /></svg><svg style="position:absolute;left:879px;top:74.5px" width="16" height="16" viewBox="0 0 16 16"><rect x="1" y="5" width="9" height="10" fill="#b8b4a4" stroke="none" stroke-width="0" /><path d="M10 2L14 7" stroke="#b8b4a4" stroke-width="1.2" /><path d="M14 2L10 7" stroke="#b8b4a4" stroke-width="1.2" /><rect x="6" y="1" width="3" height="3" fill="#b8b4a4" stroke="none" stroke-width="0" /></svg><svg style="position:absolute;left:902.5px;top:74.5px" width="16" height="16" viewBox="0 0 16 16"><rect x="5" y="1" width="10" height="10" fill="#b8b4a4" stroke="none" stroke-width="0" /><path d="M1 15L8 8" stroke="#b8b4a4" stroke-width="1.5" /><rect x="9" y="5" width="2" height="2" fill="#fff" stroke="none" stroke-width="0" /></svg><svg style="position:absolute;left:1005px;top:74.5px" width="16" height="16" viewBox="0 0 16 16"><path d="M2 8l4-4h6v4l-5 1z" fill="#f8f000" stroke="#000" stroke-width="0.7"/><rect x="13" y="3" width="2.5" height="5" fill="#0000c0" stroke="none" stroke-width="0" /><rect x="1" y="10" width="15" height="5" fill="#d0d0d0" stroke="#000" stroke-width="0.8" /><rect x="3" y="11.5" width="2" height="2" fill="#e00000"/><rect x="7" y="11.5" width="2" height="2" fill="#e00000"/><rect x="11" y="11.5" width="2" height="2" fill="#e00000"/></svg><svg style="position:absolute;left:922px;top:56px" width="7" height="4"><path d="M0 0h7l-3.5 4z" fill="#000"/></svg><div style="position:absolute;left:0;top:97px;width:1024px;height:17px;background:#ece9d8"></div><div style="position:absolute;left:18px;top:97px;width:1006px;height:16px;background:linear-gradient(#f3f1ea,#fdfdf9)"></div><div style="position:absolute;left:18px;top:113px;width:1006px;height:1px;background:#ece9d8"></div><div style="position:absolute;left:1px;top:97px;width:16px;height:16px;background:#ece9d8;box-shadow:inset 1px 1px 0 #fff,inset -1px -1px 0 #aca899"></div><svg style="position:absolute;left:1px;top:97px" width="16" height="16"><path d="M11 5q3 4 0 7q-3 2-6 0q-2-2-1-5" stroke="#0030c0" stroke-width="2.4" fill="none"/><path d="M8 2h5v5z" fill="#000"/><path d="M9 9L13 4" stroke="#000" stroke-width="1.6"/></svg><div style="position:absolute;left:19px;top:98px;width:13px;height:13px;border:1px solid #b4c8f6;border-radius:2px;background:linear-gradient(135deg,#dbe6fd,#c6d6fb 50%,#b8cbf9)"></div><svg style="position:absolute;left:19px;top:98px" width="15" height="15" viewBox="0 0 15 15"><path d="M9 3L5 7.5L9 12" stroke="#4d6185" stroke-width="2.2" fill="none"/></svg><div style="position:absolute;left:1007px;top:98px;width:14px;height:13px;border:1px solid #b4c8f6;border-radius:2px;background:linear-gradient(135deg,#dbe6fd,#c6d6fb 50%,#b8cbf9)"></div><svg style="position:absolute;left:1007px;top:98px" width="16" height="15" viewBox="0 0 15 15"><path d="M6 3L10 7.5L6 12" stroke="#4d6185" stroke-width="2.2" fill="none"/></svg><div style="position:absolute;left:632px;top:98px;width:44px;height:13px;border:1px solid #b4c8f6;border-radius:2px;background:linear-gradient(#c8d8fc,#bccffa)"></div><svg style="position:absolute;left:650px;top:102px" width="9" height="8"><path d="M1.5 0v8M3.5 0v8M5.5 0v8M7.5 0v8" stroke="#eef3fe" stroke-width="1"/><path d="M2.5 1v7M4.5 1v7M6.5 1v7M8.5 1v7" stroke="#8faaf0" stroke-width="1"/></svg><div style="position:absolute;left:18px;top:114px;width:1006px;height:583px;background:#fff"></div><svg style="position:absolute;left:0;top:0" width="1024" height="738" viewBox="0 0 1024 738" shape-rendering="crispEdges"><defs><clipPath id="dc"><rect x="18" y="114" width="1006" height="583"/></clipPath></defs><g clip-path="url(#dc)"><path d="M73.5 660L92.8 653.6M73.5 660L73.5 628.1M73.5 660L92.8 621.8M92.8 653.6L113 659.5M92.8 653.6L92.8 621.8M92.8 653.6L113 627.6M113 659.5L93.7 665.9M113 659.5L113 627.6M113 659.5L93.7 634M93.7 665.9L73.5 660M93.7 665.9L93.7 634M93.7 665.9L73.5 628.1M73.5 628.1L92.8 621.8M73.5 628.1L73.5 596.2M73.5 628.1L92.8 589.9M92.8 621.8L113 627.6M92.8 621.8L92.8 589.9M92.8 621.8L113 595.7M113 627.6L93.7 634M113 627.6L113 595.7M113 627.6L93.7 602.1M93.7 634L73.5 628.1M93.7 634L93.7 602.1M93.7 634L73.5 596.2M73.5 596.2L92.8 589.9M73.5 596.2L73.5 564.3M73.5 596.2L92.8 558M92.8 589.9L113 595.7M92.8 589.9L92.8 558M92.8 589.9L113 563.8M113 595.7L93.7 602.1M113 595.7L113 563.8M113 595.7L93.7 570.2M93.7 602.1L73.5 596.2M93.7 602.1L93.7 570.2M93.7 602.1L73.5 564.3M73.5 564.3L92.8 558M73.5 564.3L73.5 532.4M73.5 564.3L92.8 526M92.8 558L113 563.8M92.8 558L92.8 526M92.8 558L113 531.9M113 563.8L93.7 570.2M113 563.8L113 531.9M113 563.8L93.7 538.2M93.7 570.2L73.5 564.3M93.7 570.2L93.7 538.2M93.7 570.2L73.5 532.4M73.5 532.4L92.8 526M73.5 532.4L73.5 500.5M73.5 532.4L92.8 494.1M92.8 526L113 531.9M92.8 526L92.8 494.1M92.8 526L113 500M113 531.9L93.7 538.2M113 531.9L113 500M113 531.9L93.7 506.4M93.7 538.2L73.5 532.4M93.7 538.2L93.7 506.4M93.7 538.2L73.5 500.5M73.5 500.5L92.8 494.1M73.5 500.5L73.5 468.6M73.5 500.5L92.8 462.2M92.8 494.1L113 500M92.8 494.1L92.8 462.2M92.8 494.1L113 468.1M113 500L93.7 506.4M113 500L113 468.1M113 500L93.7 474.5M93.7 506.4L73.5 500.5M93.7 506.4L93.7 474.5M93.7 506.4L73.5 468.6M73.5 468.6L92.8 462.2M73.5 468.6L73.5 436.7M73.5 468.6L92.8 430.4M92.8 462.2L113 468.1M92.8 462.2L92.8 430.4M92.8 462.2L113 436.2M113 468.1L93.7 474.5M113 468.1L113 436.2M113 468.1L93.7 442.6M93.7 474.5L73.5 468.6M93.7 474.5L93.7 442.6M93.7 474.5L73.5 436.7M73.5 436.7L92.8 430.4M73.5 436.7L73.5 404.8M73.5 436.7L92.8 398.4M92.8 430.4L113 436.2M92.8 430.4L92.8 398.4M92.8 430.4L113 404.3M113 436.2L93.7 442.6M113 436.2L113 404.3M113 436.2L93.7 410.7M93.7 442.6L73.5 436.7M93.7 442.6L93.7 410.7M93.7 442.6L73.5 404.8M73.5 404.8L92.8 398.4M73.5 404.8L73.5 372.9M73.5 404.8L92.8 366.6M92.8 398.4L113 404.3M92.8 398.4L92.8 366.6M92.8 398.4L113 372.4M113 404.3L93.7 410.7M113 404.3L113 372.4M113 404.3L93.7 378.8M93.7 410.7L73.5 404.8M93.7 410.7L93.7 378.8M93.7 410.7L73.5 372.9M73.5 372.9L92.8 366.6M73.5 372.9L73.5 341M73.5 372.9L92.8 334.6M92.8 366.6L113 372.4M92.8 366.6L92.8 334.6M92.8 366.6L113 340.5M113 372.4L93.7 378.8M113 372.4L113 340.5M113 372.4L93.7 346.9M93.7 378.8L73.5 372.9M93.7 378.8L93.7 346.9M93.7 378.8L73.5 341M73.5 341L92.8 334.6M73.5 341L73.5 296M73.5 341L92.8 289.6M92.8 334.6L113 340.5M92.8 334.6L92.8 289.6M92.8 334.6L113 295.5M113 340.5L93.7 346.9M113 340.5L113 295.5M113 340.5L93.7 301.9M93.7 346.9L73.5 341M93.7 346.9L93.7 301.9M93.7 346.9L73.5 296M73.5 296L92.8 289.6M92.8 289.6L113 295.5M113 295.5L93.7 301.9M93.7 301.9L73.5 296M530.5 509.6L549.8 503.3M530.5 509.6L530.5 477.7M530.5 509.6L549.8 471.4M549.8 503.3L570 509.1M549.8 503.3L549.8 471.4M549.8 503.3L570 477.2M570 509.1L550.7 515.5M570 509.1L570 477.2M570 509.1L550.7 483.6M550.7 515.5L530.5 509.6M550.7 515.5L550.7 483.6M550.7 515.5L530.5 477.7M530.5 477.7L549.8 471.4M530.5 477.7L530.5 445.8M530.5 477.7L549.8 439.5M549.8 471.4L570 477.2M549.8 471.4L549.8 439.5M549.8 471.4L570 445.3M570 477.2L550.7 483.6M570 477.2L570 445.3M570 477.2L550.7 451.7M550.7 483.6L530.5 477.7M550.7 483.6L550.7 451.7M550.7 483.6L530.5 445.8M530.5 445.8L549.8 439.5M530.5 445.8L530.5 413.9M530.5 445.8L549.8 407.6M549.8 439.5L570 445.3M549.8 439.5L549.8 407.6M549.8 439.5L570 413.4M570 445.3L550.7 451.7M570 445.3L570 413.4M570 445.3L550.7 419.8M550.7 451.7L530.5 445.8M550.7 451.7L550.7 419.8M550.7 451.7L530.5 413.9M530.5 413.9L549.8 407.6M530.5 413.9L530.5 382M530.5 413.9L549.8 375.7M549.8 407.6L570 413.4M549.8 407.6L549.8 375.7M549.8 407.6L570 381.5M570 413.4L550.7 419.8M570 413.4L570 381.5M570 413.4L550.7 387.9M550.7 419.8L530.5 413.9M550.7 419.8L550.7 387.9M550.7 419.8L530.5 382M530.5 382L549.8 375.7M530.5 382L530.5 350.1M530.5 382L549.8 343.8M549.8 375.7L570 381.5M549.8 375.7L549.8 343.8M549.8 375.7L570 349.6M570 381.5L550.7 387.9M570 381.5L570 349.6M570 381.5L550.7 356M550.7 387.9L530.5 382M550.7 387.9L550.7 356M550.7 387.9L530.5 350.1M530.5 350.1L549.8 343.8M530.5 350.1L530.5 318.2M530.5 350.1L549.8 311.9M549.8 343.8L570 349.6M549.8 343.8L549.8 311.9M549.8 343.8L570 317.7M570 349.6L550.7 356M570 349.6L570 317.7M570 349.6L550.7 324.1M550.7 356L530.5 350.1M550.7 356L550.7 324.1M550.7 356L530.5 318.2M530.5 318.2L549.8 311.9M530.5 318.2L530.5 286.3M530.5 318.2L549.8 280M549.8 311.9L570 317.7M549.8 311.9L549.8 280M549.8 311.9L570 285.8M570 317.7L550.7 324.1M570 317.7L570 285.8M570 317.7L550.7 292.2M550.7 324.1L530.5 318.2M550.7 324.1L550.7 292.2M550.7 324.1L530.5 286.3M530.5 286.3L549.8 280M530.5 286.3L530.5 254.4M530.5 286.3L549.8 248.1M549.8 280L570 285.8M549.8 280L549.8 248.1M549.8 280L570 253.9M570 285.8L550.7 292.2M570 285.8L570 253.9M570 285.8L550.7 260.3M550.7 292.2L530.5 286.3M550.7 292.2L550.7 260.3M550.7 292.2L530.5 254.4M530.5 254.4L549.8 248.1M530.5 254.4L530.5 222.5M530.5 254.4L549.8 216.2M549.8 248.1L570 253.9M549.8 248.1L549.8 216.2M549.8 248.1L570 222M570 253.9L550.7 260.3M570 253.9L570 222M570 253.9L550.7 228.4M550.7 260.3L530.5 254.4M550.7 260.3L550.7 228.4M550.7 260.3L530.5 222.5M530.5 222.5L549.8 216.2M530.5 222.5L530.5 190.6M530.5 222.5L549.8 184.3M549.8 216.2L570 222M549.8 216.2L549.8 184.3M549.8 216.2L570 190.1M570 222L550.7 228.4M570 222L570 190.1M570 222L550.7 196.5M550.7 228.4L530.5 222.5M550.7 228.4L550.7 196.5M550.7 228.4L530.5 190.6M530.5 190.6L549.8 184.3M530.5 190.6L530.5 145.6M530.5 190.6L549.8 139.3M549.8 184.3L570 190.1M549.8 184.3L549.8 139.3M549.8 184.3L570 145.1M570 190.1L550.7 196.5M570 190.1L570 145.1M570 190.1L550.7 151.5M550.7 196.5L530.5 190.6M550.7 196.5L550.7 151.5M550.7 196.5L530.5 145.6M530.5 145.6L549.8 139.3M549.8 139.3L570 145.1M570 145.1L550.7 151.5M550.7 151.5L530.5 145.6M926.8 624.4L946.1 618.1M926.8 624.4L926.8 592.5M926.8 624.4L946.1 586.2M946.1 618.1L966.3 623.9M946.1 618.1L946.1 586.2M946.1 618.1L966.3 592M966.3 623.9L947 630.3M966.3 623.9L966.3 592M966.3 623.9L947 598.4M947 630.3L926.8 624.4M947 630.3L947 598.4M947 630.3L926.8 592.5M926.8 592.5L946.1 586.2M926.8 592.5L926.8 560.6M926.8 592.5L946.1 554.3M946.1 586.2L966.3 592M946.1 586.2L946.1 554.3M946.1 586.2L966.3 560.1M966.3 592L947 598.4M966.3 592L966.3 560.1M966.3 592L947 566.5M947 598.4L926.8 592.5M947 598.4L947 566.5M947 598.4L926.8 560.6M926.8 560.6L946.1 554.3M926.8 560.6L926.8 528.7M926.8 560.6L946.1 522.4M946.1 554.3L966.3 560.1M946.1 554.3L946.1 522.4M946.1 554.3L966.3 528.2M966.3 560.1L947 566.5M966.3 560.1L966.3 528.2M966.3 560.1L947 534.6M947 566.5L926.8 560.6M947 566.5L947 534.6M947 566.5L926.8 528.7M926.8 528.7L946.1 522.4M926.8 528.7L926.8 496.8M926.8 528.7L946.1 490.5M946.1 522.4L966.3 528.2M946.1 522.4L946.1 490.5M946.1 522.4L966.3 496.3M966.3 528.2L947 534.6M966.3 528.2L966.3 496.3M966.3 528.2L947 502.7M947 534.6L926.8 528.7M947 534.6L947 502.7M947 534.6L926.8 496.8M926.8 496.8L946.1 490.5M926.8 496.8L926.8 464.9M926.8 496.8L946.1 458.6M946.1 490.5L966.3 496.3M946.1 490.5L946.1 458.6M946.1 490.5L966.3 464.4M966.3 496.3L947 502.7M966.3 496.3L966.3 464.4M966.3 496.3L947 470.8M947 502.7L926.8 496.8M947 502.7L947 470.8M947 502.7L926.8 464.9M926.8 464.9L946.1 458.6M926.8 464.9L926.8 433M926.8 464.9L946.1 426.7M946.1 458.6L966.3 464.4M946.1 458.6L946.1 426.7M946.1 458.6L966.3 432.5M966.3 464.4L947 470.8M966.3 464.4L966.3 432.5M966.3 464.4L947 438.9M947 470.8L926.8 464.9M947 470.8L947 438.9M947 470.8L926.8 433M926.8 433L946.1 426.7M926.8 433L926.8 401.1M926.8 433L946.1 394.8M946.1 426.7L966.3 432.5M946.1 426.7L946.1 394.8M946.1 426.7L966.3 400.6M966.3 432.5L947 438.9M966.3 432.5L966.3 400.6M966.3 432.5L947 407M947 438.9L926.8 433M947 438.9L947 407M947 438.9L926.8 401.1M926.8 401.1L946.1 394.8M926.8 401.1L926.8 369.2M926.8 401.1L946.1 362.9M946.1 394.8L966.3 400.6M946.1 394.8L946.1 362.9M946.1 394.8L966.3 368.7M966.3 400.6L947 407M966.3 400.6L966.3 368.7M966.3 400.6L947 375.1M947 407L926.8 401.1M947 407L947 375.1M947 407L926.8 369.2M926.8 369.2L946.1 362.9M926.8 369.2L926.8 337.3M926.8 369.2L946.1 331M946.1 362.9L966.3 368.7M946.1 362.9L946.1 331M946.1 362.9L966.3 336.8M966.3 368.7L947 375.1M966.3 368.7L966.3 336.8M966.3 368.7L947 343.2M947 375.1L926.8 369.2M947 375.1L947 343.2M947 375.1L926.8 337.3M926.8 337.3L946.1 331M926.8 337.3L926.8 305.4M926.8 337.3L946.1 299.1M946.1 331L966.3 336.8M946.1 331L946.1 299.1M946.1 331L966.3 304.9M966.3 336.8L947 343.2M966.3 336.8L966.3 304.9M966.3 336.8L947 311.3M947 343.2L926.8 337.3M947 343.2L947 311.3M947 343.2L926.8 305.4M926.8 305.4L946.1 299.1M926.8 305.4L926.8 260.4M926.8 305.4L946.1 254.1M946.1 299.1L966.3 304.9M946.1 299.1L946.1 254.1M946.1 299.1L966.3 259.9M966.3 304.9L947 311.3M966.3 304.9L966.3 259.9M966.3 304.9L947 266.3M947 311.3L926.8 305.4M947 311.3L947 266.3M947 311.3L926.8 260.4M926.8 260.4L946.1 254.1M946.1 254.1L966.3 259.9M966.3 259.9L947 266.3M947 266.3L926.8 260.4M92.8 289.6L92.8 334.6M113 295.5L113 340.5M92.8 289.6L113 295.5M92.8 334.6L113 340.5M92.8 289.6L124.1 279.4M113 295.5L144.3 285.2M92.8 334.6L124.1 324.4M113 340.5L144.3 330.2M124.1 279.4L113 295.5M92.8 289.6L124.1 324.4M113 295.5L144.3 330.2M124.1 279.4L124.1 324.4M144.3 285.2L144.3 330.2M124.1 279.4L144.3 285.2M124.1 324.4L144.3 330.2M124.1 279.4L155.3 269.1M144.3 285.2L175.5 274.9M124.1 324.4L155.3 314.1M144.3 330.2L175.5 319.9M155.3 269.1L144.3 285.2M124.1 279.4L155.3 314.1M144.3 285.2L175.5 319.9M155.3 269.1L155.3 314.1M175.5 274.9L175.5 319.9M155.3 269.1L175.5 274.9M155.3 314.1L175.5 319.9M155.3 269.1L186.6 258.8M175.5 274.9L206.8 264.6M155.3 314.1L186.6 303.8M175.5 319.9L206.8 309.6M186.6 258.8L175.5 274.9M155.3 269.1L186.6 303.8M175.5 274.9L206.8 309.6M186.6 258.8L186.6 303.8M206.8 264.6L206.8 309.6M186.6 258.8L206.8 264.6M186.6 303.8L206.8 309.6M186.6 258.8L217.9 248.5M206.8 264.6L238.1 254.4M186.6 303.8L217.9 293.5M206.8 309.6L238.1 299.4M217.9 248.5L206.8 264.6M186.6 258.8L217.9 293.5M206.8 264.6L238.1 299.4M217.9 248.5L217.9 293.5M238.1 254.4L238.1 299.4M217.9 248.5L238.1 254.4M217.9 293.5L238.1 299.4M217.9 248.5L249.1 238.2M238.1 254.4L269.3 244.1M217.9 293.5L249.1 283.2M238.1 299.4L269.3 289.1M249.1 238.2L238.1 254.4M217.9 248.5L249.1 283.2M238.1 254.4L269.3 289.1M249.1 238.2L249.1 283.2M269.3 244.1L269.3 289.1M249.1 238.2L269.3 244.1M249.1 283.2L269.3 289.1M249.1 238.2L280.4 227.9M269.3 244.1L300.6 233.8M249.1 283.2L280.4 272.9M269.3 289.1L300.6 278.8M280.4 227.9L269.3 244.1M249.1 238.2L280.4 272.9M269.3 244.1L300.6 278.8M280.4 227.9L280.4 272.9M300.6 233.8L300.6 278.8M280.4 227.9L300.6 233.8M280.4 272.9L300.6 278.8M280.4 227.9L311.7 217.6M300.6 233.8L331.9 223.5M280.4 272.9L311.7 262.6M300.6 278.8L331.9 268.5M311.7 217.6L300.6 233.8M280.4 227.9L311.7 262.6M300.6 233.8L331.9 268.5M311.7 217.6L311.7 262.6M331.9 223.5L331.9 268.5M311.7 217.6L331.9 223.5M311.7 262.6L331.9 268.5M331.9 223.5L311.7 262.6M311.7 217.6L342.9 207.4M331.9 223.5L363.1 213.2M311.7 262.6L342.9 252.4M331.9 268.5L363.1 258.2M342.9 207.4L331.9 223.5M342.9 207.4L311.7 262.6M363.1 213.2L331.9 268.5M342.9 207.4L342.9 252.4M363.1 213.2L363.1 258.2M342.9 207.4L363.1 213.2M342.9 252.4L363.1 258.2M363.1 213.2L342.9 252.4M342.9 207.4L374.2 197.1M363.1 213.2L394.4 202.9M342.9 252.4L374.2 242.1M363.1 258.2L394.4 247.9M374.2 197.1L363.1 213.2M374.2 197.1L342.9 252.4M394.4 202.9L363.1 258.2M374.2 197.1L374.2 242.1M394.4 202.9L394.4 247.9M374.2 197.1L394.4 202.9M374.2 242.1L394.4 247.9M394.4 202.9L374.2 242.1M374.2 197.1L405.5 186.8M394.4 202.9L425.7 192.6M374.2 242.1L405.5 231.8M394.4 247.9L425.7 237.6M405.5 186.8L394.4 202.9M405.5 186.8L374.2 242.1M425.7 192.6L394.4 247.9M405.5 186.8L405.5 231.8M425.7 192.6L425.7 237.6M405.5 186.8L425.7 192.6M405.5 231.8L425.7 237.6M425.7 192.6L405.5 231.8M405.5 186.8L436.7 176.5M425.7 192.6L456.9 182.3M405.5 231.8L436.7 221.5M425.7 237.6L456.9 227.3M436.7 176.5L425.7 192.6M436.7 176.5L405.5 231.8M456.9 182.3L425.7 237.6M436.7 176.5L436.7 221.5M456.9 182.3L456.9 227.3M436.7 176.5L456.9 182.3M436.7 221.5L456.9 227.3M456.9 182.3L436.7 221.5M436.7 176.5L468 166.2M456.9 182.3L488.2 172.1M436.7 221.5L468 211.2M456.9 227.3L488.2 217.1M468 166.2L456.9 182.3M468 166.2L436.7 221.5M488.2 172.1L456.9 227.3M468 166.2L468 211.2M488.2 172.1L488.2 217.1M468 166.2L488.2 172.1M468 211.2L488.2 217.1M488.2 172.1L468 211.2M468 166.2L499.3 155.9M488.2 172.1L519.5 161.8M468 211.2L499.3 200.9M488.2 217.1L519.5 206.8M499.3 155.9L488.2 172.1M499.3 155.9L468 211.2M519.5 161.8L488.2 217.1M499.3 155.9L499.3 200.9M519.5 161.8L519.5 206.8M499.3 155.9L519.5 161.8M499.3 200.9L519.5 206.8M519.5 161.8L499.3 200.9M499.3 155.9L530.5 145.6M519.5 161.8L550.7 151.5M499.3 200.9L530.5 190.6M519.5 206.8L550.7 196.5M530.5 145.6L519.5 161.8M530.5 145.6L499.3 200.9M550.7 151.5L519.5 206.8M530.5 145.6L530.5 190.6M550.7 151.5L550.7 196.5M530.5 145.6L550.7 151.5M530.5 190.6L550.7 196.5M570 145.1L570 190.1M550.7 151.5L550.7 196.5M570 145.1L550.7 151.5M570 190.1L550.7 196.5M570 145.1L601.4 154.2M550.7 151.5L582.1 160.6M570 190.1L601.4 199.2M550.7 196.5L582.1 205.6M601.4 154.2L550.7 151.5M570 145.1L601.4 199.2M550.7 151.5L582.1 205.6M601.4 154.2L601.4 199.2M582.1 160.6L582.1 205.6M601.4 154.2L582.1 160.6M601.4 199.2L582.1 205.6M601.4 154.2L632.7 163.3M582.1 160.6L613.4 169.6M601.4 199.2L632.7 208.3M582.1 205.6L613.4 214.6M632.7 163.3L582.1 160.6M601.4 154.2L632.7 208.3M582.1 160.6L613.4 214.6M632.7 163.3L632.7 208.3M613.4 169.6L613.4 214.6M632.7 163.3L613.4 169.6M632.7 208.3L613.4 214.6M632.7 163.3L664.1 172.4M613.4 169.6L644.8 178.7M632.7 208.3L664.1 217.4M613.4 214.6L644.8 223.7M664.1 172.4L613.4 169.6M632.7 163.3L664.1 217.4M613.4 169.6L644.8 223.7M664.1 172.4L664.1 217.4M644.8 178.7L644.8 223.7M664.1 172.4L644.8 178.7M664.1 217.4L644.8 223.7M664.1 172.4L695.4 181.4M644.8 178.7L676.1 187.8M664.1 217.4L695.4 226.4M644.8 223.7L676.1 232.8M695.4 181.4L644.8 178.7M664.1 172.4L695.4 226.4M644.8 178.7L676.1 232.8M695.4 181.4L695.4 226.4M676.1 187.8L676.1 232.8M695.4 181.4L676.1 187.8M695.4 226.4L676.1 232.8M695.4 181.4L726.7 190.5M676.1 187.8L707.4 196.9M695.4 226.4L726.7 235.5M676.1 232.8L707.4 241.9M726.7 190.5L676.1 187.8M695.4 181.4L726.7 235.5M676.1 187.8L707.4 241.9M726.7 190.5L726.7 235.5M707.4 196.9L707.4 241.9M726.7 190.5L707.4 196.9M726.7 235.5L707.4 241.9M726.7 190.5L758.1 199.6M707.4 196.9L738.8 205.9M726.7 235.5L758.1 244.6M707.4 241.9L738.8 250.9M758.1 199.6L707.4 196.9M726.7 190.5L758.1 244.6M707.4 196.9L738.8 250.9M758.1 199.6L758.1 244.6M738.8 205.9L738.8 250.9M758.1 199.6L738.8 205.9M758.1 244.6L738.8 250.9M738.8 205.9L758.1 244.6M758.1 199.6L789.4 208.7M738.8 205.9L770.1 215M758.1 244.6L789.4 253.7M738.8 250.9L770.1 260M789.4 208.7L738.8 205.9M789.4 208.7L758.1 244.6M770.1 215L738.8 250.9M789.4 208.7L789.4 253.7M770.1 215L770.1 260M789.4 208.7L770.1 215M789.4 253.7L770.1 260M770.1 215L789.4 253.7M789.4 208.7L820.8 217.8M770.1 215L801.5 224.1M789.4 253.7L820.8 262.8M770.1 260L801.5 269.1M820.8 217.8L770.1 215M820.8 217.8L789.4 253.7M801.5 224.1L770.1 260M820.8 217.8L820.8 262.8M801.5 224.1L801.5 269.1M820.8 217.8L801.5 224.1M820.8 262.8L801.5 269.1M801.5 224.1L820.8 262.8M820.8 217.8L852.1 226.8M801.5 224.1L832.8 233.2M820.8 262.8L852.1 271.8M801.5 269.1L832.8 278.2M852.1 226.8L801.5 224.1M852.1 226.8L820.8 262.8M832.8 233.2L801.5 269.1M852.1 226.8L852.1 271.8M832.8 233.2L832.8 278.2M852.1 226.8L832.8 233.2M852.1 271.8L832.8 278.2M832.8 233.2L852.1 271.8M852.1 226.8L883.5 235.9M832.8 233.2L864.2 242.3M852.1 271.8L883.5 280.9M832.8 278.2L864.2 287.3M883.5 235.9L832.8 233.2M883.5 235.9L852.1 271.8M864.2 242.3L832.8 278.2M883.5 235.9L883.5 280.9M864.2 242.3L864.2 287.3M883.5 235.9L864.2 242.3M883.5 280.9L864.2 287.3M864.2 242.3L883.5 280.9M883.5 235.9L914.8 245M864.2 242.3L895.5 251.3M883.5 280.9L914.8 290M864.2 287.3L895.5 296.3M914.8 245L864.2 242.3M914.8 245L883.5 280.9M895.5 251.3L864.2 287.3M914.8 245L914.8 290M895.5 251.3L895.5 296.3M914.8 245L895.5 251.3M914.8 290L895.5 296.3M895.5 251.3L914.8 290M914.8 245L946.1 254.1M895.5 251.3L926.8 260.4M914.8 290L946.1 299.1M895.5 296.3L926.8 305.4M946.1 254.1L895.5 251.3M946.1 254.1L914.8 290M926.8 260.4L895.5 296.3M946.1 254.1L946.1 299.1M926.8 260.4L926.8 305.4M946.1 254.1L926.8 260.4M946.1 299.1L926.8 305.4" stroke="#000" stroke-width="1" fill="none"/><path d="M74.5 660.5L66.5 671.5M74.5 660.5L82.5 671.5M60.5 671.5L88.5 671.5M61.5 671.5L68.5 678.5M68 671.5L75 678.5M74.5 671.5L81.5 678.5M81 671.5L88 678.5M87.5 671.5L94.5 678.5M93.5 654.5L85.5 665.5M93.5 654.5L101.5 665.5M79.5 665.5L107.5 665.5M80.5 665.5L87.5 672.5M87 665.5L94 672.5M93.5 665.5L100.5 672.5M100 665.5L107 672.5M106.5 665.5L113.5 672.5M113.5 660.5L105.5 671.5M113.5 660.5L121.5 671.5M99.5 671.5L127.5 671.5M100.5 671.5L107.5 678.5M107 671.5L114 678.5M113.5 671.5L120.5 678.5M120 671.5L127 678.5M126.5 671.5L133.5 678.5M94.5 666.5L86.5 677.5M94.5 666.5L102.5 677.5M80.5 677.5L108.5 677.5M81.5 677.5L88.5 684.5M88 677.5L95 684.5M94.5 677.5L101.5 684.5M101 677.5L108 684.5M107.5 677.5L114.5 684.5M531.5 510.5L523.5 521.5M531.5 510.5L539.5 521.5M517.5 521.5L545.5 521.5M518.5 521.5L525.5 528.5M525 521.5L532 528.5M531.5 521.5L538.5 528.5M538 521.5L545 528.5M544.5 521.5L551.5 528.5M550.5 503.5L542.5 514.5M550.5 503.5L558.5 514.5M536.5 514.5L564.5 514.5M537.5 514.5L544.5 521.5M544 514.5L551 521.5M550.5 514.5L557.5 521.5M557 514.5L564 521.5M563.5 514.5L570.5 521.5M570.5 509.5L562.5 520.5M570.5 509.5L578.5 520.5M556.5 520.5L584.5 520.5M557.5 520.5L564.5 527.5M564 520.5L571 527.5M570.5 520.5L577.5 527.5M577 520.5L584 527.5M583.5 520.5L590.5 527.5M551.5 515.5L543.5 526.5M551.5 515.5L559.5 526.5M537.5 526.5L565.5 526.5M538.5 526.5L545.5 533.5M545 526.5L552 533.5M551.5 526.5L558.5 533.5M558 526.5L565 533.5M564.5 526.5L571.5 533.5M927.5 624.5L919.5 635.5M927.5 624.5L935.5 635.5M913.5 635.5L941.5 635.5M914.5 635.5L921.5 642.5M921 635.5L928 642.5M927.5 635.5L934.5 642.5M934 635.5L941 642.5M940.5 635.5L947.5 642.5M946.5 618.5L938.5 629.5M946.5 618.5L954.5 629.5M932.5 629.5L960.5 629.5M933.5 629.5L940.5 636.5M940 629.5L947 636.5M946.5 629.5L953.5 636.5M953 629.5L960 636.5M959.5 629.5L966.5 636.5M966.5 624.5L958.5 635.5M966.5 624.5L974.5 635.5M952.5 635.5L980.5 635.5M953.5 635.5L960.5 642.5M960 635.5L967 642.5M966.5 635.5L973.5 642.5M973 635.5L980 642.5M979.5 635.5L986.5 642.5M947.5 630.5L939.5 641.5M947.5 630.5L955.5 641.5M933.5 641.5L961.5 641.5M934.5 641.5L941.5 648.5M941 641.5L948 648.5M947.5 641.5L954.5 648.5M954 641.5L961 648.5M960.5 641.5L967.5 648.5" stroke="#1c6ed0" stroke-width="1" fill="none"/><path d="M73.5 660L92.8 653.6M73.5 660L71.4 628.1M73.5 660L90.7 621.8M92.8 653.6L113 659.5M92.8 653.6L90.7 621.8M92.8 653.6L110.9 627.6M113 659.5L93.7 665.9M113 659.5L110.9 627.6M113 659.5L91.6 634M93.7 665.9L73.5 660M93.7 665.9L91.6 634M93.7 665.9L71.4 628.1M71.4 628.1L90.7 621.8M71.4 628.1L69.5 596.2M71.4 628.1L88.8 589.9M90.7 621.8L110.9 627.6M90.7 621.8L88.8 589.9M90.7 621.8L109 595.7M110.9 627.6L91.6 634M110.9 627.6L109 595.7M110.9 627.6L89.7 602.1M91.6 634L71.4 628.1M91.6 634L89.7 602.1M91.6 634L69.5 596.2M69.5 596.2L88.8 589.9M69.5 596.2L67.9 564.3M69.5 596.2L87.2 558M88.8 589.9L109 595.7M88.8 589.9L87.2 558M88.8 589.9L107.4 563.8M109 595.7L89.7 602.1M109 595.7L107.4 563.8M109 595.7L88.1 570.2M89.7 602.1L69.5 596.2M89.7 602.1L88.1 570.2M89.7 602.1L67.9 564.3M67.9 564.3L87.2 558M67.9 564.3L66.7 532.4M67.9 564.3L86 526M87.2 558L107.4 563.8M87.2 558L86 526M87.2 558L106.2 531.9M107.4 563.8L88.1 570.2M107.4 563.8L106.2 531.9M107.4 563.8L86.9 538.2M88.1 570.2L67.9 564.3M88.1 570.2L86.9 538.2M88.1 570.2L66.7 532.4M66.7 532.4L86 526M66.7 532.4L66.1 500.5M66.7 532.4L85.4 494.1M86 526L106.2 531.9M86 526L85.4 494.1M86 526L105.6 500M106.2 531.9L86.9 538.2M106.2 531.9L105.6 500M106.2 531.9L86.3 506.4M86.9 538.2L66.7 532.4M86.9 538.2L86.3 506.4M86.9 538.2L66.1 500.5M66.1 500.5L85.4 494.1M66.1 500.5L66.1 468.6M66.1 500.5L85.4 462.2M85.4 494.1L105.6 500M85.4 494.1L85.4 462.2M85.4 494.1L105.6 468.1M105.6 500L86.3 506.4M105.6 500L105.6 468.1M105.6 500L86.3 474.5M86.3 506.4L66.1 500.5M86.3 506.4L86.3 474.5M86.3 506.4L66.1 468.6M66.1 468.6L85.4 462.2M66.1 468.6L66.7 436.7M66.1 468.6L86 430.4M85.4 462.2L105.6 468.1M85.4 462.2L86 430.4M85.4 462.2L106.2 436.2M105.6 468.1L86.3 474.5M105.6 468.1L106.2 436.2M105.6 468.1L86.9 442.6M86.3 474.5L66.1 468.6M86.3 474.5L86.9 442.6M86.3 474.5L66.7 436.7M66.7 436.7L86 430.4M66.7 436.7L68.1 404.8M66.7 436.7L87.4 398.4M86 430.4L106.2 436.2M86 430.4L87.4 398.4M86 430.4L107.6 404.3M106.2 436.2L86.9 442.6M106.2 436.2L107.6 404.3M106.2 436.2L88.3 410.7M86.9 442.6L66.7 436.7M86.9 442.6L88.3 410.7M86.9 442.6L68.1 404.8M68.1 404.8L87.4 398.4M68.1 404.8L70.3 372.9M68.1 404.8L89.6 366.6M87.4 398.4L107.6 404.3M87.4 398.4L89.6 366.6M87.4 398.4L109.8 372.4M107.6 404.3L88.3 410.7M107.6 404.3L109.8 372.4M107.6 404.3L90.5 378.8M88.3 410.7L68.1 404.8M88.3 410.7L90.5 378.8M88.3 410.7L70.3 372.9M70.3 372.9L89.6 366.6M70.3 372.9L73.3 341M70.3 372.9L92.6 334.6M89.6 366.6L109.8 372.4M89.6 366.6L92.6 334.6M89.6 366.6L112.8 340.5M109.8 372.4L90.5 378.8M109.8 372.4L112.8 340.5M109.8 372.4L93.5 346.9M90.5 378.8L70.3 372.9M90.5 378.8L93.5 346.9M90.5 378.8L73.3 341M73.3 341L92.6 334.6M73.3 341L79.5 296M73.3 341L98.8 289.6M92.6 334.6L112.8 340.5M92.6 334.6L98.8 289.6M92.6 334.6L119 295.5M112.8 340.5L93.5 346.9M112.8 340.5L119 295.5M112.8 340.5L99.7 301.9M93.5 346.9L73.3 341M93.5 346.9L99.7 301.9M93.5 346.9L79.5 296M79.5 296L98.8 289.6M98.8 289.6L119 295.5M119 295.5L99.7 301.9M99.7 301.9L79.5 296M530.5 509.6L549.8 503.3M530.5 509.6L531.2 477.7M530.5 509.6L550.5 471.4M549.8 503.3L570 509.1M549.8 503.3L550.5 471.4M549.8 503.3L570.7 477.2M570 509.1L550.7 515.5M570 509.1L570.7 477.2M570 509.1L551.4 483.6M550.7 515.5L530.5 509.6M550.7 515.5L551.4 483.6M550.7 515.5L531.2 477.7M531.2 477.7L550.5 471.4M531.2 477.7L531.8 445.8M531.2 477.7L551.1 439.5M550.5 471.4L570.7 477.2M550.5 471.4L551.1 439.5M550.5 471.4L571.3 445.3M570.7 477.2L551.4 483.6M570.7 477.2L571.3 445.3M570.7 477.2L552 451.7M551.4 483.6L531.2 477.7M551.4 483.6L552 451.7M551.4 483.6L531.8 445.8M531.8 445.8L551.1 439.5M531.8 445.8L532.4 413.9M531.8 445.8L551.7 407.6M551.1 439.5L571.3 445.3M551.1 439.5L551.7 407.6M551.1 439.5L571.9 413.4M571.3 445.3L552 451.7M571.3 445.3L571.9 413.4M571.3 445.3L552.6 419.8M552 451.7L531.8 445.8M552 451.7L552.6 419.8M552 451.7L532.4 413.9M532.4 413.9L551.7 407.6M532.4 413.9L532.8 382M532.4 413.9L552.1 375.7M551.7 407.6L571.9 413.4M551.7 407.6L552.1 375.7M551.7 407.6L572.3 381.5M571.9 413.4L552.6 419.8M571.9 413.4L572.3 381.5M571.9 413.4L553 387.9M552.6 419.8L532.4 413.9M552.6 419.8L553 387.9M552.6 419.8L532.8 382M532.8 382L552.1 375.7M532.8 382L533 350.1M532.8 382L552.3 343.8M552.1 375.7L572.3 381.5M552.1 375.7L552.3 343.8M552.1 375.7L572.5 349.6M572.3 381.5L553 387.9M572.3 381.5L572.5 349.6M572.3 381.5L553.2 356M553 387.9L532.8 382M553 387.9L553.2 356M553 387.9L533 350.1M533 350.1L552.3 343.8M533 350.1L533 318.2M533 350.1L552.3 311.9M552.3 343.8L572.5 349.6M552.3 343.8L552.3 311.9M552.3 343.8L572.5 317.7M572.5 349.6L553.2 356M572.5 349.6L572.5 317.7M572.5 349.6L553.2 324.1M553.2 356L533 350.1M553.2 356L553.2 324.1M553.2 356L533 318.2M533 318.2L552.3 311.9M533 318.2L532.9 286.3M533 318.2L552.2 280M552.3 311.9L572.5 317.7M552.3 311.9L552.2 280M552.3 311.9L572.4 285.8M572.5 317.7L553.2 324.1M572.5 317.7L572.4 285.8M572.5 317.7L553.1 292.2M553.2 324.1L533 318.2M553.2 324.1L553.1 292.2M553.2 324.1L532.9 286.3M532.9 286.3L552.2 280M532.9 286.3L532.5 254.4M532.9 286.3L551.8 248.1M552.2 280L572.4 285.8M552.2 280L551.8 248.1M552.2 280L572 253.9M572.4 285.8L553.1 292.2M572.4 285.8L572 253.9M572.4 285.8L552.7 260.3M553.1 292.2L532.9 286.3M553.1 292.2L552.7 260.3M553.1 292.2L532.5 254.4M532.5 254.4L551.8 248.1M532.5 254.4L532.1 222.5M532.5 254.4L551.4 216.2M551.8 248.1L572 253.9M551.8 248.1L551.4 216.2M551.8 248.1L571.6 222M572 253.9L552.7 260.3M572 253.9L571.6 222M572 253.9L552.3 228.4M552.7 260.3L532.5 254.4M552.7 260.3L552.3 228.4M552.7 260.3L532.1 222.5M532.1 222.5L551.4 216.2M532.1 222.5L531.5 190.6M532.1 222.5L550.8 184.3M551.4 216.2L571.6 222M551.4 216.2L550.8 184.3M551.4 216.2L571 190.1M571.6 222L552.3 228.4M571.6 222L571 190.1M571.6 222L551.7 196.5M552.3 228.4L532.1 222.5M552.3 228.4L551.7 196.5M552.3 228.4L531.5 190.6M531.5 190.6L550.8 184.3M531.5 190.6L530.5 145.6M531.5 190.6L549.8 139.3M550.8 184.3L571 190.1M550.8 184.3L549.8 139.3M550.8 184.3L570 145.1M571 190.1L551.7 196.5M571 190.1L570 145.1M571 190.1L550.7 151.5M551.7 196.5L531.5 190.6M551.7 196.5L550.7 151.5M551.7 196.5L530.5 145.6M530.5 145.6L549.8 139.3M549.8 139.3L570 145.1M570 145.1L550.7 151.5M550.7 151.5L530.5 145.6M926.8 624.4L946.1 618.1M926.8 624.4L927.9 592.5M926.8 624.4L947.2 586.2M946.1 618.1L966.3 623.9M946.1 618.1L947.2 586.2M946.1 618.1L967.4 592M966.3 623.9L947 630.3M966.3 623.9L967.4 592M966.3 623.9L948.1 598.4M947 630.3L926.8 624.4M947 630.3L948.1 598.4M947 630.3L927.9 592.5M927.9 592.5L947.2 586.2M927.9 592.5L928.9 560.6M927.9 592.5L948.2 554.3M947.2 586.2L967.4 592M947.2 586.2L948.2 554.3M947.2 586.2L968.4 560.1M967.4 592L948.1 598.4M967.4 592L968.4 560.1M967.4 592L949.1 566.5M948.1 598.4L927.9 592.5M948.1 598.4L949.1 566.5M948.1 598.4L928.9 560.6M928.9 560.6L948.2 554.3M928.9 560.6L929.8 528.7M928.9 560.6L949.1 522.4M948.2 554.3L968.4 560.1M948.2 554.3L949.1 522.4M948.2 554.3L969.3 528.2M968.4 560.1L949.1 566.5M968.4 560.1L969.3 528.2M968.4 560.1L950 534.6M949.1 566.5L928.9 560.6M949.1 566.5L950 534.6M949.1 566.5L929.8 528.7M929.8 528.7L949.1 522.4M929.8 528.7L930.4 496.8M929.8 528.7L949.7 490.5M949.1 522.4L969.3 528.2M949.1 522.4L949.7 490.5M949.1 522.4L969.9 496.3M969.3 528.2L950 534.6M969.3 528.2L969.9 496.3M969.3 528.2L950.6 502.7M950 534.6L929.8 528.7M950 534.6L950.6 502.7M950 534.6L930.4 496.8M930.4 496.8L949.7 490.5M930.4 496.8L930.8 464.9M930.4 496.8L950.1 458.6M949.7 490.5L969.9 496.3M949.7 490.5L950.1 458.6M949.7 490.5L970.3 464.4M969.9 496.3L950.6 502.7M969.9 496.3L970.3 464.4M969.9 496.3L951 470.8M950.6 502.7L930.4 496.8M950.6 502.7L951 470.8M950.6 502.7L930.8 464.9M930.8 464.9L950.1 458.6M930.8 464.9L930.8 433M930.8 464.9L950.1 426.7M950.1 458.6L970.3 464.4M950.1 458.6L950.1 426.7M950.1 458.6L970.3 432.5M970.3 464.4L951 470.8M970.3 464.4L970.3 432.5M970.3 464.4L951 438.9M951 470.8L930.8 464.9M951 470.8L951 438.9M951 470.8L930.8 433M930.8 433L950.1 426.7M930.8 433L930.6 401.1M930.8 433L949.9 394.8M950.1 426.7L970.3 432.5M950.1 426.7L949.9 394.8M950.1 426.7L970.1 400.6M970.3 432.5L951 438.9M970.3 432.5L970.1 400.6M970.3 432.5L950.8 407M951 438.9L930.8 433M951 438.9L950.8 407M951 438.9L930.6 401.1M930.6 401.1L949.9 394.8M930.6 401.1L930.1 369.2M930.6 401.1L949.4 362.9M949.9 394.8L970.1 400.6M949.9 394.8L949.4 362.9M949.9 394.8L969.6 368.7M970.1 400.6L950.8 407M970.1 400.6L969.6 368.7M970.1 400.6L950.3 375.1M950.8 407L930.6 401.1M950.8 407L950.3 375.1M950.8 407L930.1 369.2M930.1 369.2L949.4 362.9M930.1 369.2L929.3 337.3M930.1 369.2L948.6 331M949.4 362.9L969.6 368.7M949.4 362.9L948.6 331M949.4 362.9L968.8 336.8M969.6 368.7L950.3 375.1M969.6 368.7L968.8 336.8M969.6 368.7L949.5 343.2M950.3 375.1L930.1 369.2M950.3 375.1L949.5 343.2M950.3 375.1L929.3 337.3M929.3 337.3L948.6 331M929.3 337.3L928.4 305.4M929.3 337.3L947.7 299.1M948.6 331L968.8 336.8M948.6 331L947.7 299.1M948.6 331L967.9 304.9M968.8 336.8L949.5 343.2M968.8 336.8L967.9 304.9M968.8 336.8L948.6 311.3M949.5 343.2L929.3 337.3M949.5 343.2L948.6 311.3M949.5 343.2L928.4 305.4M928.4 305.4L947.7 299.1M928.4 305.4L926.8 260.4M928.4 305.4L946.1 254.1M947.7 299.1L967.9 304.9M947.7 299.1L946.1 254.1M947.7 299.1L966.3 259.9M967.9 304.9L948.6 311.3M967.9 304.9L966.3 259.9M967.9 304.9L947 266.3M948.6 311.3L928.4 305.4M948.6 311.3L947 266.3M948.6 311.3L926.8 260.4M926.8 260.4L946.1 254.1M946.1 254.1L966.3 259.9M966.3 259.9L947 266.3M947 266.3L926.8 260.4M98.8 289.6L98.8 334.6M119 295.5L119 340.5M98.8 289.6L119 295.5M98.8 334.6L119 340.5M98.8 289.6L129.6 300.6M119 295.5L149.8 306.4M98.8 334.6L133.8 345.1M119 340.5L154 351M129.6 300.6L119 295.5M98.8 289.6L133.8 345.1M119 295.5L154 351M129.6 300.6L133.8 345.1M149.8 306.4L154 351M129.6 300.6L149.8 306.4M133.8 345.1L154 351M129.6 300.6L160.5 308.3M149.8 306.4L180.7 314.1M133.8 345.1L167.9 352.6M154 351L188.1 358.4M160.5 308.3L149.8 306.4M129.6 300.6L167.9 352.6M149.8 306.4L188.1 358.4M160.5 308.3L167.9 352.6M180.7 314.1L188.1 358.4M160.5 308.3L180.7 314.1M167.9 352.6L188.1 358.4M160.5 308.3L191.3 312.7M180.7 314.1L211.5 318.5M167.9 352.6L200.6 357.1M188.1 358.4L220.8 363M191.3 312.7L180.7 314.1M160.5 308.3L200.6 357.1M180.7 314.1L220.8 363M191.3 312.7L200.6 357.1M211.5 318.5L220.8 363M191.3 312.7L211.5 318.5M200.6 357.1L220.8 363M191.3 312.7L222.1 313.8M211.5 318.5L242.3 319.7M200.6 357.1L231.4 358.9M220.8 363L251.6 364.7M222.1 313.8L211.5 318.5M191.3 312.7L231.4 358.9M211.5 318.5L251.6 364.7M222.1 313.8L231.4 358.9M242.3 319.7L251.6 364.7M222.1 313.8L242.3 319.7M231.4 358.9L251.6 364.7M222.1 313.8L253 311.7M242.3 319.7L273.2 317.5M231.4 358.9L260.4 357.8M251.6 364.7L280.6 363.7M253 311.7L242.3 319.7M222.1 313.8L260.4 357.8M242.3 319.7L280.6 363.7M253 311.7L260.4 357.8M273.2 317.5L280.6 363.7M253 311.7L273.2 317.5M260.4 357.8L280.6 363.7M253 311.7L283.8 306.3M273.2 317.5L304 312.1M260.4 357.8L287.9 353.8M280.6 363.7L308.1 359.7M283.8 306.3L273.2 317.5M253 311.7L287.9 353.8M273.2 317.5L308.1 359.7M283.8 306.3L287.9 353.8M304 312.1L308.1 359.7M283.8 306.3L304 312.1M287.9 353.8L308.1 359.7M283.8 306.3L314.7 297.6M304 312.1L334.9 303.5M287.9 353.8L314.7 346.6M308.1 359.7L334.9 352.5M314.7 297.6L304 312.1M283.8 306.3L314.7 346.6M304 312.1L334.9 352.5M314.7 297.6L314.7 346.6M334.9 303.5L334.9 352.5M314.7 297.6L334.9 303.5M314.7 346.6L334.9 352.5M334.9 303.5L314.7 346.6M314.7 297.6L345.5 285.7M334.9 303.5L365.7 291.6M314.7 346.6L341.4 336M334.9 352.5L361.6 341.8M345.5 285.7L334.9 303.5M345.5 285.7L314.7 346.6M365.7 291.6L334.9 352.5M345.5 285.7L341.4 336M365.7 291.6L361.6 341.8M345.5 285.7L365.7 291.6M341.4 336L361.6 341.8M365.7 291.6L341.4 336M345.5 285.7L376.3 270.5M365.7 291.6L396.5 276.4M341.4 336L368.9 321.6M361.6 341.8L389.1 327.4M376.3 270.5L365.7 291.6M376.3 270.5L341.4 336M396.5 276.4L361.6 341.8M376.3 270.5L368.9 321.6M396.5 276.4L389.1 327.4M376.3 270.5L396.5 276.4M368.9 321.6L389.1 327.4M396.5 276.4L368.9 321.6M376.3 270.5L407.2 252.1M396.5 276.4L427.4 257.9M368.9 321.6L397.9 303.3M389.1 327.4L418.1 309.1M407.2 252.1L396.5 276.4M407.2 252.1L368.9 321.6M427.4 257.9L389.1 327.4M407.2 252.1L397.9 303.3M427.4 257.9L418.1 309.1M407.2 252.1L427.4 257.9M397.9 303.3L418.1 309.1M427.4 257.9L397.9 303.3M407.2 252.1L438 230.4M427.4 257.9L458.2 236.2M397.9 303.3L428.7 280.9M418.1 309.1L448.9 286.8M438 230.4L427.4 257.9M438 230.4L397.9 303.3M458.2 236.2L418.1 309.1M438 230.4L428.7 280.9M458.2 236.2L448.9 286.8M438 230.4L458.2 236.2M428.7 280.9L448.9 286.8M458.2 236.2L428.7 280.9M438 230.4L468.8 205.4M458.2 236.2L489 211.2M428.7 280.9L461.4 254.6M448.9 286.8L481.6 260.4M468.8 205.4L458.2 236.2M468.8 205.4L428.7 280.9M489 211.2L448.9 286.8M468.8 205.4L461.4 254.6M489 211.2L481.6 260.4M468.8 205.4L489 211.2M461.4 254.6L481.6 260.4M489 211.2L461.4 254.6M468.8 205.4L499.7 177.1M489 211.2L519.9 183M461.4 254.6L495.6 224.4M481.6 260.4L515.8 230.2M499.7 177.1L489 211.2M499.7 177.1L461.4 254.6M519.9 183L481.6 260.4M499.7 177.1L495.6 224.4M519.9 183L515.8 230.2M499.7 177.1L519.9 183M495.6 224.4L515.8 230.2M519.9 183L495.6 224.4M499.7 177.1L530.5 145.6M519.9 183L550.7 151.5M495.6 224.4L530.5 190.6M515.8 230.2L550.7 196.5M530.5 145.6L519.9 183M530.5 145.6L495.6 224.4M550.7 151.5L515.8 230.2M530.5 145.6L530.5 190.6M550.7 151.5L550.7 196.5M530.5 145.6L550.7 151.5M530.5 190.6L550.7 196.5M570 145.1L570 190.1M550.7 151.5L550.7 196.5M570 145.1L550.7 151.5M570 190.1L550.7 196.5M570 145.1L601.4 166M550.7 151.5L582.1 172.3M570 190.1L604.2 218.4M550.7 196.5L584.9 224.7M601.4 166L550.7 151.5M570 145.1L604.2 218.4M550.7 151.5L584.9 224.7M601.4 166L604.2 218.4M582.1 172.3L584.9 224.7M601.4 166L582.1 172.3M604.2 218.4L584.9 224.7M601.4 166L632.7 181.2M582.1 172.3L613.4 187.5M604.2 218.4L637.7 237.6M584.9 224.7L618.4 243.9M632.7 181.2L582.1 172.3M601.4 166L637.7 237.6M582.1 172.3L618.4 243.9M632.7 181.2L637.7 237.6M613.4 187.5L618.4 243.9M632.7 181.2L613.4 187.5M637.7 237.6L618.4 243.9M632.7 181.2L664.1 194.4M613.4 187.5L644.8 200.8M637.7 237.6L669.8 253.4M618.4 243.9L650.5 259.7M664.1 194.4L613.4 187.5M632.7 181.2L669.8 253.4M613.4 187.5L650.5 259.7M664.1 194.4L669.8 253.4M644.8 200.8L650.5 259.7M664.1 194.4L644.8 200.8M669.8 253.4L650.5 259.7M664.1 194.4L695.4 206.3M644.8 200.8L676.1 212.7M669.8 253.4L700.4 266.6M650.5 259.7L681.1 272.9M695.4 206.3L644.8 200.8M664.1 194.4L700.4 266.6M644.8 200.8L681.1 272.9M695.4 206.3L700.4 266.6M676.1 212.7L681.1 272.9M695.4 206.3L676.1 212.7M700.4 266.6L681.1 272.9M695.4 206.3L726.7 217M676.1 212.7L707.4 223.3M700.4 266.6L729.6 277.5M681.1 272.9L710.3 283.9M726.7 217L676.1 212.7M695.4 206.3L729.6 277.5M676.1 212.7L710.3 283.9M726.7 217L729.6 277.5M707.4 223.3L710.3 283.9M726.7 217L707.4 223.3M729.6 277.5L710.3 283.9M726.7 217L758.1 226.6M707.4 223.3L738.8 232.9M729.6 277.5L758.1 286.6M710.3 283.9L738.8 292.9M758.1 226.6L707.4 223.3M726.7 217L758.1 286.6M707.4 223.3L738.8 292.9M758.1 226.6L758.1 286.6M738.8 232.9L738.8 292.9M758.1 226.6L738.8 232.9M758.1 286.6L738.8 292.9M738.8 232.9L758.1 286.6M758.1 226.6L789.4 235.1M738.8 232.9L770.1 241.5M758.1 286.6L786.5 294M738.8 292.9L767.2 300.4M789.4 235.1L738.8 232.9M789.4 235.1L758.1 286.6M770.1 241.5L738.8 292.9M789.4 235.1L786.5 294M770.1 241.5L767.2 300.4M789.4 235.1L770.1 241.5M786.5 294L767.2 300.4M770.1 241.5L786.5 294M789.4 235.1L820.8 242.6M770.1 241.5L801.5 249M786.5 294L815.8 300M767.2 300.4L796.5 306.3M820.8 242.6L770.1 241.5M820.8 242.6L786.5 294M801.5 249L767.2 300.4M820.8 242.6L815.8 300M801.5 249L796.5 306.3M820.8 242.6L801.5 249M815.8 300L796.5 306.3M801.5 249L815.8 300M820.8 242.6L852.1 248.9M801.5 249L832.8 255.3M815.8 300L846.4 304.5M796.5 306.3L827.1 310.8M852.1 248.9L801.5 249M852.1 248.9L815.8 300M832.8 255.3L796.5 306.3M852.1 248.9L846.4 304.5M832.8 255.3L827.1 310.8M852.1 248.9L832.8 255.3M846.4 304.5L827.1 310.8M832.8 255.3L846.4 304.5M852.1 248.9L883.5 253.8M832.8 255.3L864.2 260.1M846.4 304.5L878.5 307.3M827.1 310.8L859.2 313.6M883.5 253.8L832.8 255.3M883.5 253.8L846.4 304.5M864.2 260.1L827.1 310.8M883.5 253.8L878.5 307.3M864.2 260.1L859.2 313.6M883.5 253.8L864.2 260.1M878.5 307.3L859.2 313.6M864.2 260.1L878.5 307.3M883.5 253.8L914.8 256.8M864.2 260.1L895.5 263.1M878.5 307.3L911.9 307.5M859.2 313.6L892.6 313.8M914.8 256.8L864.2 260.1M914.8 256.8L878.5 307.3M895.5 263.1L859.2 313.6M914.8 256.8L911.9 307.5M895.5 263.1L892.6 313.8M914.8 256.8L895.5 263.1M911.9 307.5L892.6 313.8M895.5 263.1L911.9 307.5M914.8 256.8L946.1 254.1M895.5 263.1L926.8 260.4M911.9 307.5L946.1 299.1M892.6 313.8L926.8 305.4M946.1 254.1L895.5 263.1M946.1 254.1L911.9 307.5M926.8 260.4L892.6 313.8M946.1 254.1L946.1 299.1M926.8 260.4L926.8 305.4M946.1 254.1L926.8 260.4M946.1 299.1L926.8 305.4" stroke="#ff3c00" stroke-width="1" fill="none"/><path d="M93.5 292.5L93.5 298.5M87.5 290.5L91.5 290.5M113.5 298.5L113.5 304.5M107.5 296.5L111.5 296.5M93.5 328.5L93.5 333.5M113.5 333.5L113.5 338.5M124.5 281.5L124.5 287.5M118.5 279.5L122.5 279.5M144.5 287.5L144.5 293.5M138.5 285.5L142.5 285.5M124.5 317.5L124.5 322.5M144.5 323.5L144.5 328.5M155.5 271.5L155.5 277.5M149.5 269.5L153.5 269.5M176.5 277.5L176.5 283.5M170.5 275.5L174.5 275.5M155.5 307.5L155.5 312.5M176.5 313.5L176.5 318.5M187.5 261.5L187.5 267.5M181.5 259.5L185.5 259.5M207.5 267.5L207.5 273.5M201.5 265.5L205.5 265.5M187.5 297.5L187.5 302.5M207.5 303.5L207.5 308.5M218.5 251.5L218.5 257.5M212.5 249.5L216.5 249.5M238.5 256.5L238.5 262.5M232.5 254.5L236.5 254.5M218.5 287.5L218.5 292.5M238.5 292.5L238.5 297.5M249.5 240.5L249.5 246.5M243.5 238.5L247.5 238.5M269.5 246.5L269.5 252.5M263.5 244.5L267.5 244.5M249.5 276.5L249.5 281.5M269.5 282.5L269.5 287.5M280.5 230.5L280.5 236.5M274.5 228.5L278.5 228.5M301.5 236.5L301.5 242.5M295.5 234.5L299.5 234.5M280.5 266.5L280.5 271.5M301.5 272.5L301.5 277.5M312.5 220.5L312.5 226.5M306.5 218.5L310.5 218.5M332.5 225.5L332.5 231.5M326.5 223.5L330.5 223.5M312.5 256.5L312.5 261.5M332.5 261.5L332.5 266.5M343.5 209.5L343.5 215.5M337.5 207.5L341.5 207.5M363.5 215.5L363.5 221.5M357.5 213.5L361.5 213.5M343.5 245.5L343.5 250.5M363.5 251.5L363.5 256.5M374.5 199.5L374.5 205.5M368.5 197.5L372.5 197.5M394.5 205.5L394.5 211.5M388.5 203.5L392.5 203.5M374.5 235.5L374.5 240.5M394.5 241.5L394.5 246.5M405.5 189.5L405.5 195.5M399.5 187.5L403.5 187.5M426.5 195.5L426.5 201.5M420.5 193.5L424.5 193.5M405.5 225.5L405.5 230.5M426.5 231.5L426.5 236.5M437.5 178.5L437.5 184.5M431.5 176.5L435.5 176.5M457.5 184.5L457.5 190.5M451.5 182.5L455.5 182.5M437.5 214.5L437.5 219.5M457.5 220.5L457.5 225.5M468.5 168.5L468.5 174.5M462.5 166.5L466.5 166.5M488.5 174.5L488.5 180.5M482.5 172.5L486.5 172.5M468.5 204.5L468.5 209.5M488.5 210.5L488.5 215.5M499.5 158.5L499.5 164.5M493.5 156.5L497.5 156.5M519.5 164.5L519.5 170.5M513.5 162.5L517.5 162.5M499.5 194.5L499.5 199.5M519.5 200.5L519.5 205.5M531.5 148.5L531.5 154.5M525.5 146.5L529.5 146.5M551.5 153.5L551.5 159.5M545.5 151.5L549.5 151.5M531.5 184.5L531.5 189.5M551.5 189.5L551.5 194.5M570.5 147.5L570.5 153.5M564.5 145.5L568.5 145.5M551.5 153.5L551.5 159.5M545.5 151.5L549.5 151.5M570.5 183.5L570.5 188.5M551.5 189.5L551.5 194.5M601.5 156.5L601.5 162.5M595.5 154.5L599.5 154.5M582.5 163.5L582.5 169.5M576.5 161.5L580.5 161.5M601.5 192.5L601.5 197.5M582.5 199.5L582.5 204.5M633.5 165.5L633.5 171.5M627.5 163.5L631.5 163.5M613.5 172.5L613.5 178.5M607.5 170.5L611.5 170.5M633.5 201.5L633.5 206.5M613.5 208.5L613.5 213.5M664.5 174.5L664.5 180.5M658.5 172.5L662.5 172.5M645.5 181.5L645.5 187.5M639.5 179.5L643.5 179.5M664.5 210.5L664.5 215.5M645.5 217.5L645.5 222.5M695.5 183.5L695.5 189.5M689.5 181.5L693.5 181.5M676.5 190.5L676.5 196.5M670.5 188.5L674.5 188.5M695.5 219.5L695.5 224.5M676.5 226.5L676.5 231.5M727.5 193.5L727.5 199.5M721.5 191.5L725.5 191.5M707.5 199.5L707.5 205.5M701.5 197.5L705.5 197.5M727.5 229.5L727.5 234.5M707.5 235.5L707.5 240.5M758.5 202.5L758.5 208.5M752.5 200.5L756.5 200.5M739.5 208.5L739.5 214.5M733.5 206.5L737.5 206.5M758.5 238.5L758.5 243.5M739.5 244.5L739.5 249.5M789.5 211.5L789.5 217.5M783.5 209.5L787.5 209.5M770.5 217.5L770.5 223.5M764.5 215.5L768.5 215.5M789.5 247.5L789.5 252.5M770.5 253.5L770.5 258.5M821.5 220.5L821.5 226.5M815.5 218.5L819.5 218.5M801.5 226.5L801.5 232.5M795.5 224.5L799.5 224.5M821.5 256.5L821.5 261.5M801.5 262.5L801.5 267.5M852.5 229.5L852.5 235.5M846.5 227.5L850.5 227.5M833.5 235.5L833.5 241.5M827.5 233.5L831.5 233.5M852.5 265.5L852.5 270.5M833.5 271.5L833.5 276.5M883.5 238.5L883.5 244.5M877.5 236.5L881.5 236.5M864.5 244.5L864.5 250.5M858.5 242.5L862.5 242.5M883.5 274.5L883.5 279.5M864.5 280.5L864.5 285.5M915.5 247.5L915.5 253.5M909.5 245.5L913.5 245.5M896.5 253.5L896.5 259.5M890.5 251.5L894.5 251.5M915.5 283.5L915.5 288.5M896.5 289.5L896.5 294.5M946.5 256.5L946.5 262.5M940.5 254.5L944.5 254.5M927.5 262.5L927.5 268.5M921.5 260.5L925.5 260.5M946.5 292.5L946.5 297.5M927.5 298.5L927.5 303.5" stroke="#ff0000" stroke-width="1" fill="none"/><path d="M94.5 282.5L94.5 289.5M95.5 299.5L100.5 295.5M104.5 285.5L104.5 295.5M107.5 284.5L107.5 295.5M110.5 287.5L110.5 295.5M114.5 288.5L114.5 295.5M115.5 305.5L120.5 301.5M89.5 325.5L89.5 333.5M95.5 344.5L100.5 340.5M109.5 330.5L109.5 338.5M115.5 349.5L120.5 345.5M115.5 268.5L115.5 278.5M118.5 267.5L118.5 278.5M121.5 270.5L121.5 278.5M125.5 271.5L125.5 278.5M126.5 288.5L131.5 284.5M135.5 274.5L135.5 284.5M138.5 273.5L138.5 284.5M141.5 276.5L141.5 284.5M146.5 294.5L151.5 290.5M120.5 314.5L120.5 322.5M126.5 333.5L131.5 329.5M140.5 320.5L140.5 328.5M146.5 339.5L151.5 335.5M146.5 258.5L146.5 268.5M149.5 257.5L149.5 268.5M152.5 260.5L152.5 268.5M157.5 278.5L162.5 274.5M177.5 267.5L177.5 274.5M178.5 284.5L183.5 280.5M151.5 304.5L151.5 312.5M157.5 323.5L162.5 319.5M172.5 310.5L172.5 318.5M178.5 329.5L183.5 325.5M188.5 251.5L188.5 258.5M189.5 268.5L194.5 264.5M198.5 254.5L198.5 264.5M201.5 253.5L201.5 264.5M204.5 256.5L204.5 264.5M208.5 257.5L208.5 264.5M209.5 274.5L214.5 270.5M183.5 294.5L183.5 302.5M189.5 313.5L194.5 309.5M203.5 300.5L203.5 308.5M209.5 319.5L214.5 315.5M209.5 238.5L209.5 248.5M212.5 237.5L212.5 248.5M215.5 240.5L215.5 248.5M219.5 241.5L219.5 248.5M220.5 258.5L225.5 254.5M229.5 243.5L229.5 253.5M232.5 242.5L232.5 253.5M235.5 245.5L235.5 253.5M240.5 263.5L245.5 259.5M214.5 284.5L214.5 292.5M220.5 303.5L225.5 299.5M234.5 289.5L234.5 297.5M240.5 308.5L245.5 304.5M240.5 227.5L240.5 237.5M243.5 226.5L243.5 237.5M246.5 229.5L246.5 237.5M251.5 247.5L256.5 243.5M270.5 236.5L270.5 243.5M271.5 253.5L276.5 249.5M245.5 273.5L245.5 281.5M251.5 292.5L256.5 288.5M265.5 279.5L265.5 287.5M271.5 298.5L276.5 294.5M281.5 220.5L281.5 227.5M282.5 237.5L287.5 233.5M292.5 223.5L292.5 233.5M295.5 222.5L295.5 233.5M298.5 225.5L298.5 233.5M302.5 226.5L302.5 233.5M303.5 243.5L308.5 239.5M276.5 263.5L276.5 271.5M282.5 282.5L287.5 278.5M297.5 269.5L297.5 277.5M303.5 288.5L308.5 284.5M303.5 207.5L303.5 217.5M306.5 206.5L306.5 217.5M309.5 209.5L309.5 217.5M313.5 210.5L313.5 217.5M314.5 227.5L319.5 223.5M323.5 212.5L323.5 222.5M326.5 211.5L326.5 222.5M329.5 214.5L329.5 222.5M334.5 232.5L339.5 228.5M308.5 253.5L308.5 261.5M314.5 272.5L319.5 268.5M328.5 258.5L328.5 266.5M334.5 277.5L339.5 273.5M334.5 196.5L334.5 206.5M337.5 195.5L337.5 206.5M340.5 198.5L340.5 206.5M345.5 216.5L350.5 212.5M364.5 205.5L364.5 212.5M365.5 222.5L370.5 218.5M339.5 242.5L339.5 250.5M345.5 261.5L350.5 257.5M359.5 248.5L359.5 256.5M365.5 267.5L370.5 263.5M375.5 189.5L375.5 196.5M376.5 206.5L381.5 202.5M385.5 192.5L385.5 202.5M388.5 191.5L388.5 202.5M391.5 194.5L391.5 202.5M395.5 195.5L395.5 202.5M396.5 212.5L401.5 208.5M370.5 232.5L370.5 240.5M376.5 251.5L381.5 247.5M390.5 238.5L390.5 246.5M396.5 257.5L401.5 253.5M396.5 176.5L396.5 186.5M399.5 175.5L399.5 186.5M402.5 178.5L402.5 186.5M406.5 179.5L406.5 186.5M407.5 196.5L412.5 192.5M417.5 182.5L417.5 192.5M420.5 181.5L420.5 192.5M423.5 184.5L423.5 192.5M428.5 202.5L433.5 198.5M401.5 222.5L401.5 230.5M407.5 241.5L412.5 237.5M422.5 228.5L422.5 236.5M428.5 247.5L433.5 243.5M428.5 165.5L428.5 175.5M431.5 164.5L431.5 175.5M434.5 167.5L434.5 175.5M439.5 185.5L444.5 181.5M458.5 174.5L458.5 181.5M459.5 191.5L464.5 187.5M433.5 211.5L433.5 219.5M439.5 230.5L444.5 226.5M453.5 217.5L453.5 225.5M459.5 236.5L464.5 232.5M469.5 158.5L469.5 165.5M470.5 175.5L475.5 171.5M479.5 161.5L479.5 171.5M482.5 160.5L482.5 171.5M485.5 163.5L485.5 171.5M489.5 164.5L489.5 171.5M490.5 181.5L495.5 177.5M464.5 201.5L464.5 209.5M470.5 220.5L475.5 216.5M484.5 207.5L484.5 215.5M490.5 226.5L495.5 222.5M490.5 145.5L490.5 155.5M493.5 144.5L493.5 155.5M496.5 147.5L496.5 155.5M500.5 148.5L500.5 155.5M501.5 165.5L506.5 161.5M510.5 151.5L510.5 161.5M513.5 150.5L513.5 161.5M516.5 153.5L516.5 161.5M521.5 171.5L526.5 167.5M495.5 191.5L495.5 199.5M501.5 210.5L506.5 206.5M515.5 197.5L515.5 205.5M521.5 216.5L526.5 212.5M522.5 135.5L522.5 145.5M525.5 134.5L525.5 145.5M528.5 137.5L528.5 145.5M533.5 155.5L538.5 151.5M552.5 143.5L552.5 150.5M553.5 160.5L558.5 156.5M527.5 181.5L527.5 189.5M533.5 200.5L538.5 196.5M547.5 186.5L547.5 194.5M553.5 205.5L558.5 201.5M571.5 137.5L571.5 144.5M572.5 154.5L577.5 150.5M542.5 140.5L542.5 150.5M545.5 139.5L545.5 150.5M548.5 142.5L548.5 150.5M552.5 143.5L552.5 150.5M553.5 160.5L558.5 156.5M566.5 180.5L566.5 188.5M572.5 199.5L577.5 195.5M547.5 186.5L547.5 194.5M553.5 205.5L558.5 201.5M592.5 143.5L592.5 153.5M595.5 142.5L595.5 153.5M598.5 145.5L598.5 153.5M602.5 146.5L602.5 153.5M603.5 163.5L608.5 159.5M573.5 150.5L573.5 160.5M576.5 149.5L576.5 160.5M579.5 152.5L579.5 160.5M584.5 170.5L589.5 166.5M597.5 189.5L597.5 197.5M603.5 208.5L608.5 204.5M578.5 196.5L578.5 204.5M584.5 215.5L589.5 211.5M624.5 152.5L624.5 162.5M627.5 151.5L627.5 162.5M630.5 154.5L630.5 162.5M635.5 172.5L640.5 168.5M614.5 162.5L614.5 169.5M615.5 179.5L620.5 175.5M629.5 198.5L629.5 206.5M635.5 217.5L640.5 213.5M609.5 205.5L609.5 213.5M615.5 224.5L620.5 220.5M665.5 164.5L665.5 171.5M666.5 181.5L671.5 177.5M636.5 168.5L636.5 178.5M639.5 167.5L639.5 178.5M642.5 170.5L642.5 178.5M646.5 171.5L646.5 178.5M647.5 188.5L652.5 184.5M660.5 207.5L660.5 215.5M666.5 226.5L671.5 222.5M641.5 214.5L641.5 222.5M647.5 233.5L652.5 229.5M686.5 170.5L686.5 180.5M689.5 169.5L689.5 180.5M692.5 172.5L692.5 180.5M696.5 173.5L696.5 180.5M697.5 190.5L702.5 186.5M667.5 177.5L667.5 187.5M670.5 176.5L670.5 187.5M673.5 179.5L673.5 187.5M678.5 197.5L683.5 193.5M691.5 216.5L691.5 224.5M697.5 235.5L702.5 231.5M672.5 223.5L672.5 231.5M678.5 242.5L683.5 238.5M718.5 180.5L718.5 190.5M721.5 179.5L721.5 190.5M724.5 182.5L724.5 190.5M729.5 200.5L734.5 196.5M708.5 189.5L708.5 196.5M709.5 206.5L714.5 202.5M723.5 226.5L723.5 234.5M729.5 245.5L734.5 241.5M703.5 232.5L703.5 240.5M709.5 251.5L714.5 247.5M759.5 192.5L759.5 199.5M760.5 209.5L765.5 205.5M730.5 195.5L730.5 205.5M733.5 194.5L733.5 205.5M736.5 197.5L736.5 205.5M740.5 198.5L740.5 205.5M741.5 215.5L746.5 211.5M754.5 235.5L754.5 243.5M760.5 254.5L765.5 250.5M735.5 241.5L735.5 249.5M741.5 260.5L746.5 256.5M780.5 198.5L780.5 208.5M783.5 197.5L783.5 208.5M786.5 200.5L786.5 208.5M790.5 201.5L790.5 208.5M791.5 218.5L796.5 214.5M761.5 204.5L761.5 214.5M764.5 203.5L764.5 214.5M767.5 206.5L767.5 214.5M772.5 224.5L777.5 220.5M785.5 244.5L785.5 252.5M791.5 263.5L796.5 259.5M766.5 250.5L766.5 258.5M772.5 269.5L777.5 265.5M812.5 207.5L812.5 217.5M815.5 206.5L815.5 217.5M818.5 209.5L818.5 217.5M823.5 227.5L828.5 223.5M802.5 216.5L802.5 223.5M803.5 233.5L808.5 229.5M817.5 253.5L817.5 261.5M823.5 272.5L828.5 268.5M797.5 259.5L797.5 267.5M803.5 278.5L808.5 274.5M853.5 219.5L853.5 226.5M854.5 236.5L859.5 232.5M824.5 222.5L824.5 232.5M827.5 221.5L827.5 232.5M830.5 224.5L830.5 232.5M834.5 225.5L834.5 232.5M835.5 242.5L840.5 238.5M848.5 262.5L848.5 270.5M854.5 281.5L859.5 277.5M829.5 268.5L829.5 276.5M835.5 287.5L840.5 283.5M874.5 225.5L874.5 235.5M877.5 224.5L877.5 235.5M880.5 227.5L880.5 235.5M884.5 228.5L884.5 235.5M885.5 245.5L890.5 241.5M855.5 231.5L855.5 241.5M858.5 230.5L858.5 241.5M861.5 233.5L861.5 241.5M866.5 251.5L871.5 247.5M879.5 271.5L879.5 279.5M885.5 290.5L890.5 286.5M860.5 277.5L860.5 285.5M866.5 296.5L871.5 292.5M906.5 234.5L906.5 244.5M909.5 233.5L909.5 244.5M912.5 236.5L912.5 244.5M917.5 254.5L922.5 250.5M897.5 243.5L897.5 250.5M898.5 260.5L903.5 256.5M911.5 280.5L911.5 288.5M917.5 299.5L922.5 295.5M892.5 286.5L892.5 294.5M898.5 305.5L903.5 301.5M947.5 246.5L947.5 253.5M948.5 263.5L953.5 259.5M918.5 249.5L918.5 259.5M921.5 248.5L921.5 259.5M924.5 251.5L924.5 259.5M928.5 252.5L928.5 259.5M929.5 269.5L934.5 265.5M942.5 289.5L942.5 297.5M948.5 308.5L953.5 304.5M923.5 295.5L923.5 303.5M929.5 314.5L934.5 310.5M76.5 665.5L82.5 663.5M76.5 665.5L76.5 661.5M95.5 659.5L101.5 657.5M95.5 659.5L95.5 655.5M115.5 665.5L121.5 663.5M115.5 665.5L115.5 661.5M96.5 671.5L102.5 669.5M96.5 671.5L96.5 667.5M76.5 633.5L82.5 631.5M76.5 633.5L76.5 629.5M95.5 627.5L101.5 625.5M95.5 627.5L95.5 623.5M115.5 633.5L121.5 631.5M115.5 633.5L115.5 629.5M96.5 639.5L102.5 637.5M96.5 639.5L96.5 635.5M76.5 601.5L82.5 599.5M76.5 601.5L76.5 597.5M95.5 595.5L101.5 593.5M95.5 595.5L95.5 591.5M115.5 601.5L121.5 599.5M115.5 601.5L115.5 597.5M96.5 607.5L102.5 605.5M96.5 607.5L96.5 603.5M76.5 569.5L82.5 567.5M76.5 569.5L76.5 565.5M95.5 563.5L101.5 561.5M95.5 563.5L95.5 559.5M115.5 569.5L121.5 567.5M115.5 569.5L115.5 565.5M96.5 575.5L102.5 573.5M96.5 575.5L96.5 571.5M76.5 537.5L82.5 535.5M76.5 537.5L76.5 533.5M95.5 531.5L101.5 529.5M95.5 531.5L95.5 527.5M115.5 537.5L121.5 535.5M115.5 537.5L115.5 533.5M96.5 543.5L102.5 541.5M96.5 543.5L96.5 539.5M76.5 505.5L82.5 503.5M76.5 505.5L76.5 501.5M95.5 499.5L101.5 497.5M95.5 499.5L95.5 495.5M115.5 505.5L121.5 503.5M115.5 505.5L115.5 501.5M96.5 511.5L102.5 509.5M96.5 511.5L96.5 507.5M76.5 474.5L82.5 472.5M76.5 474.5L76.5 470.5M95.5 467.5L101.5 465.5M95.5 467.5L95.5 463.5M115.5 473.5L121.5 471.5M115.5 473.5L115.5 469.5M96.5 479.5L102.5 477.5M96.5 479.5L96.5 475.5M76.5 442.5L82.5 440.5M76.5 442.5L76.5 438.5M95.5 435.5L101.5 433.5M95.5 435.5L95.5 431.5M115.5 441.5L121.5 439.5M115.5 441.5L115.5 437.5M96.5 448.5L102.5 446.5M96.5 448.5L96.5 444.5M76.5 410.5L82.5 408.5M76.5 410.5L76.5 406.5M95.5 403.5L101.5 401.5M95.5 403.5L95.5 399.5M115.5 409.5L121.5 407.5M115.5 409.5L115.5 405.5M96.5 416.5L102.5 414.5M96.5 416.5L96.5 412.5M76.5 378.5L82.5 376.5M76.5 378.5L76.5 374.5M95.5 372.5L101.5 370.5M95.5 372.5L95.5 368.5M115.5 377.5L121.5 375.5M115.5 377.5L115.5 373.5M96.5 384.5L102.5 382.5M96.5 384.5L96.5 380.5M76.5 346.5L82.5 344.5M76.5 346.5L76.5 342.5M95.5 340.5L101.5 338.5M95.5 340.5L95.5 336.5M115.5 345.5L121.5 343.5M115.5 345.5L115.5 341.5M96.5 352.5L102.5 350.5M96.5 352.5L96.5 348.5M76.5 301.5L82.5 299.5M76.5 301.5L76.5 297.5M95.5 295.5L101.5 293.5M95.5 295.5L95.5 291.5M115.5 301.5L121.5 299.5M115.5 301.5L115.5 297.5M96.5 307.5L102.5 305.5M96.5 307.5L96.5 303.5M533.5 515.5L539.5 513.5M533.5 515.5L533.5 511.5M552.5 508.5L558.5 506.5M552.5 508.5L552.5 504.5M572.5 514.5L578.5 512.5M572.5 514.5L572.5 510.5M553.5 520.5L559.5 518.5M553.5 520.5L553.5 516.5M533.5 483.5L539.5 481.5M533.5 483.5L533.5 479.5M552.5 476.5L558.5 474.5M552.5 476.5L552.5 472.5M572.5 482.5L578.5 480.5M572.5 482.5L572.5 478.5M553.5 489.5L559.5 487.5M553.5 489.5L553.5 485.5M533.5 451.5L539.5 449.5M533.5 451.5L533.5 447.5M552.5 444.5L558.5 442.5M552.5 444.5L552.5 440.5M572.5 450.5L578.5 448.5M572.5 450.5L572.5 446.5M553.5 457.5L559.5 455.5M553.5 457.5L553.5 453.5M533.5 419.5L539.5 417.5M533.5 419.5L533.5 415.5M552.5 413.5L558.5 411.5M552.5 413.5L552.5 409.5M572.5 418.5L578.5 416.5M572.5 418.5L572.5 414.5M553.5 425.5L559.5 423.5M553.5 425.5L553.5 421.5M533.5 387.5L539.5 385.5M533.5 387.5L533.5 383.5M552.5 381.5L558.5 379.5M552.5 381.5L552.5 377.5M572.5 387.5L578.5 385.5M572.5 387.5L572.5 383.5M553.5 393.5L559.5 391.5M553.5 393.5L553.5 389.5M533.5 355.5L539.5 353.5M533.5 355.5L533.5 351.5M552.5 349.5L558.5 347.5M552.5 349.5L552.5 345.5M572.5 355.5L578.5 353.5M572.5 355.5L572.5 351.5M553.5 361.5L559.5 359.5M553.5 361.5L553.5 357.5M533.5 323.5L539.5 321.5M533.5 323.5L533.5 319.5M552.5 317.5L558.5 315.5M552.5 317.5L552.5 313.5M572.5 323.5L578.5 321.5M572.5 323.5L572.5 319.5M553.5 329.5L559.5 327.5M553.5 329.5L553.5 325.5M533.5 291.5L539.5 289.5M533.5 291.5L533.5 287.5M552.5 285.5L558.5 283.5M552.5 285.5L552.5 281.5M572.5 291.5L578.5 289.5M572.5 291.5L572.5 287.5M553.5 297.5L559.5 295.5M553.5 297.5L553.5 293.5M533.5 259.5L539.5 257.5M533.5 259.5L533.5 255.5M552.5 253.5L558.5 251.5M552.5 253.5L552.5 249.5M572.5 259.5L578.5 257.5M572.5 259.5L572.5 255.5M553.5 265.5L559.5 263.5M553.5 265.5L553.5 261.5M533.5 228.5L539.5 226.5M533.5 228.5L533.5 224.5M552.5 221.5L558.5 219.5M552.5 221.5L552.5 217.5M572.5 227.5L578.5 225.5M572.5 227.5L572.5 223.5M553.5 233.5L559.5 231.5M553.5 233.5L553.5 229.5M533.5 196.5L539.5 194.5M533.5 196.5L533.5 192.5M552.5 189.5L558.5 187.5M552.5 189.5L552.5 185.5M572.5 195.5L578.5 193.5M572.5 195.5L572.5 191.5M553.5 201.5L559.5 199.5M553.5 201.5L553.5 197.5M528.5 134.5L528.5 144.5M532.5 136.5L532.5 144.5M533.5 151.5L539.5 149.5M533.5 151.5L533.5 147.5M547.5 127.5L547.5 137.5M551.5 129.5L551.5 137.5M552.5 144.5L558.5 142.5M552.5 144.5L552.5 140.5M567.5 133.5L567.5 143.5M571.5 135.5L571.5 143.5M572.5 150.5L578.5 148.5M572.5 150.5L572.5 146.5M548.5 139.5L548.5 149.5M552.5 141.5L552.5 149.5M553.5 156.5L559.5 154.5M553.5 156.5L553.5 152.5M929.5 629.5L935.5 627.5M929.5 629.5L929.5 625.5M948.5 623.5L954.5 621.5M948.5 623.5L948.5 619.5M968.5 629.5L974.5 627.5M968.5 629.5L968.5 625.5M949.5 635.5L955.5 633.5M949.5 635.5L949.5 631.5M929.5 598.5L935.5 596.5M929.5 598.5L929.5 594.5M948.5 591.5L954.5 589.5M948.5 591.5L948.5 587.5M968.5 597.5L974.5 595.5M968.5 597.5L968.5 593.5M949.5 603.5L955.5 601.5M949.5 603.5L949.5 599.5M929.5 566.5L935.5 564.5M929.5 566.5L929.5 562.5M948.5 559.5L954.5 557.5M948.5 559.5L948.5 555.5M968.5 565.5L974.5 563.5M968.5 565.5L968.5 561.5M949.5 571.5L955.5 569.5M949.5 571.5L949.5 567.5M929.5 534.5L935.5 532.5M929.5 534.5L929.5 530.5M948.5 527.5L954.5 525.5M948.5 527.5L948.5 523.5M968.5 533.5L974.5 531.5M968.5 533.5L968.5 529.5M949.5 540.5L955.5 538.5M949.5 540.5L949.5 536.5M929.5 502.5L935.5 500.5M929.5 502.5L929.5 498.5M948.5 495.5L954.5 493.5M948.5 495.5L948.5 491.5M968.5 501.5L974.5 499.5M968.5 501.5L968.5 497.5M949.5 508.5L955.5 506.5M949.5 508.5L949.5 504.5M929.5 470.5L935.5 468.5M929.5 470.5L929.5 466.5M948.5 464.5L954.5 462.5M948.5 464.5L948.5 460.5M968.5 469.5L974.5 467.5M968.5 469.5L968.5 465.5M949.5 476.5L955.5 474.5M949.5 476.5L949.5 472.5M929.5 438.5L935.5 436.5M929.5 438.5L929.5 434.5M948.5 432.5L954.5 430.5M948.5 432.5L948.5 428.5M968.5 438.5L974.5 436.5M968.5 438.5L968.5 434.5M949.5 444.5L955.5 442.5M949.5 444.5L949.5 440.5M929.5 406.5L935.5 404.5M929.5 406.5L929.5 402.5M948.5 400.5L954.5 398.5M948.5 400.5L948.5 396.5M968.5 406.5L974.5 404.5M968.5 406.5L968.5 402.5M949.5 412.5L955.5 410.5M949.5 412.5L949.5 408.5M929.5 374.5L935.5 372.5M929.5 374.5L929.5 370.5M948.5 368.5L954.5 366.5M948.5 368.5L948.5 364.5M968.5 374.5L974.5 372.5M968.5 374.5L968.5 370.5M949.5 380.5L955.5 378.5M949.5 380.5L949.5 376.5M929.5 342.5L935.5 340.5M929.5 342.5L929.5 338.5M948.5 336.5L954.5 334.5M948.5 336.5L948.5 332.5M968.5 342.5L974.5 340.5M968.5 342.5L968.5 338.5M949.5 348.5L955.5 346.5M949.5 348.5L949.5 344.5M929.5 310.5L935.5 308.5M929.5 310.5L929.5 306.5M948.5 304.5L954.5 302.5M948.5 304.5L948.5 300.5M968.5 310.5L974.5 308.5M968.5 310.5L968.5 306.5M949.5 316.5L955.5 314.5M949.5 316.5L949.5 312.5M929.5 265.5L935.5 263.5M929.5 265.5L929.5 261.5M948.5 259.5L954.5 257.5M948.5 259.5L948.5 255.5M968.5 265.5L974.5 263.5M968.5 265.5L968.5 261.5M949.5 271.5L955.5 269.5M949.5 271.5L949.5 267.5" stroke="#00e000" stroke-width="1" fill="none"/><path d="M82.5 288.5L89.5 289.5M94.5 301.5L100.5 302.5M102.5 294.5L109.5 295.5M114.5 307.5L120.5 308.5M82.5 333.5L89.5 334.5M94.5 346.5L100.5 347.5M102.5 338.5L109.5 339.5M114.5 351.5L120.5 352.5M113.5 277.5L120.5 278.5M125.5 290.5L131.5 291.5M133.5 283.5L140.5 284.5M145.5 296.5L151.5 297.5M113.5 322.5L120.5 323.5M125.5 335.5L131.5 336.5M133.5 328.5L140.5 329.5M145.5 341.5L151.5 342.5M144.5 267.5L151.5 268.5M156.5 280.5L162.5 281.5M165.5 273.5L172.5 274.5M177.5 286.5L183.5 287.5M144.5 312.5L151.5 313.5M156.5 325.5L162.5 326.5M165.5 318.5L172.5 319.5M177.5 331.5L183.5 332.5M176.5 257.5L183.5 258.5M188.5 270.5L194.5 271.5M196.5 263.5L203.5 264.5M208.5 276.5L214.5 277.5M176.5 302.5L183.5 303.5M188.5 315.5L194.5 316.5M196.5 308.5L203.5 309.5M208.5 321.5L214.5 322.5M207.5 247.5L214.5 248.5M219.5 260.5L225.5 261.5M227.5 252.5L234.5 253.5M239.5 265.5L245.5 266.5M207.5 292.5L214.5 293.5M219.5 305.5L225.5 306.5M227.5 297.5L234.5 298.5M239.5 310.5L245.5 311.5M238.5 236.5L245.5 237.5M250.5 249.5L256.5 250.5M258.5 242.5L265.5 243.5M270.5 255.5L276.5 256.5M238.5 281.5L245.5 282.5M250.5 294.5L256.5 295.5M258.5 287.5L265.5 288.5M270.5 300.5L276.5 301.5M269.5 226.5L276.5 227.5M281.5 239.5L287.5 240.5M290.5 232.5L297.5 233.5M302.5 245.5L308.5 246.5M269.5 271.5L276.5 272.5M281.5 284.5L287.5 285.5M290.5 277.5L297.5 278.5M302.5 290.5L308.5 291.5M301.5 216.5L308.5 217.5M313.5 229.5L319.5 230.5M321.5 221.5L328.5 222.5M333.5 234.5L339.5 235.5M301.5 261.5L308.5 262.5M313.5 274.5L319.5 275.5M321.5 266.5L328.5 267.5M333.5 279.5L339.5 280.5M332.5 205.5L339.5 206.5M344.5 218.5L350.5 219.5M352.5 211.5L359.5 212.5M364.5 224.5L370.5 225.5M332.5 250.5L339.5 251.5M344.5 263.5L350.5 264.5M352.5 256.5L359.5 257.5M364.5 269.5L370.5 270.5M363.5 195.5L370.5 196.5M375.5 208.5L381.5 209.5M383.5 201.5L390.5 202.5M395.5 214.5L401.5 215.5M363.5 240.5L370.5 241.5M375.5 253.5L381.5 254.5M383.5 246.5L390.5 247.5M395.5 259.5L401.5 260.5M394.5 185.5L401.5 186.5M406.5 198.5L412.5 199.5M415.5 191.5L422.5 192.5M427.5 204.5L433.5 205.5M394.5 230.5L401.5 231.5M406.5 243.5L412.5 244.5M415.5 236.5L422.5 237.5M427.5 249.5L433.5 250.5M426.5 174.5L433.5 175.5M438.5 187.5L444.5 188.5M446.5 180.5L453.5 181.5M458.5 193.5L464.5 194.5M426.5 219.5L433.5 220.5M438.5 232.5L444.5 233.5M446.5 225.5L453.5 226.5M458.5 238.5L464.5 239.5M457.5 164.5L464.5 165.5M469.5 177.5L475.5 178.5M477.5 170.5L484.5 171.5M489.5 183.5L495.5 184.5M457.5 209.5L464.5 210.5M469.5 222.5L475.5 223.5M477.5 215.5L484.5 216.5M489.5 228.5L495.5 229.5M488.5 154.5L495.5 155.5M500.5 167.5L506.5 168.5M508.5 160.5L515.5 161.5M520.5 173.5L526.5 174.5M488.5 199.5L495.5 200.5M500.5 212.5L506.5 213.5M508.5 205.5L515.5 206.5M520.5 218.5L526.5 219.5M520.5 144.5L527.5 145.5M532.5 157.5L538.5 158.5M540.5 149.5L547.5 150.5M552.5 162.5L558.5 163.5M520.5 189.5L527.5 190.5M532.5 202.5L538.5 203.5M540.5 194.5L547.5 195.5M552.5 207.5L558.5 208.5M559.5 143.5L566.5 144.5M571.5 156.5L577.5 157.5M540.5 149.5L547.5 150.5M552.5 162.5L558.5 163.5M559.5 188.5L566.5 189.5M571.5 201.5L577.5 202.5M540.5 194.5L547.5 195.5M552.5 207.5L558.5 208.5M590.5 152.5L597.5 153.5M602.5 165.5L608.5 166.5M571.5 159.5L578.5 160.5M583.5 172.5L589.5 173.5M590.5 197.5L597.5 198.5M602.5 210.5L608.5 211.5M571.5 204.5L578.5 205.5M583.5 217.5L589.5 218.5M622.5 161.5L629.5 162.5M634.5 174.5L640.5 175.5M602.5 168.5L609.5 169.5M614.5 181.5L620.5 182.5M622.5 206.5L629.5 207.5M634.5 219.5L640.5 220.5M602.5 213.5L609.5 214.5M614.5 226.5L620.5 227.5M653.5 170.5L660.5 171.5M665.5 183.5L671.5 184.5M634.5 177.5L641.5 178.5M646.5 190.5L652.5 191.5M653.5 215.5L660.5 216.5M665.5 228.5L671.5 229.5M634.5 222.5L641.5 223.5M646.5 235.5L652.5 236.5M684.5 179.5L691.5 180.5M696.5 192.5L702.5 193.5M665.5 186.5L672.5 187.5M677.5 199.5L683.5 200.5M684.5 224.5L691.5 225.5M696.5 237.5L702.5 238.5M665.5 231.5L672.5 232.5M677.5 244.5L683.5 245.5M716.5 189.5L723.5 190.5M728.5 202.5L734.5 203.5M696.5 195.5L703.5 196.5M708.5 208.5L714.5 209.5M716.5 234.5L723.5 235.5M728.5 247.5L734.5 248.5M696.5 240.5L703.5 241.5M708.5 253.5L714.5 254.5M747.5 198.5L754.5 199.5M759.5 211.5L765.5 212.5M728.5 204.5L735.5 205.5M740.5 217.5L746.5 218.5M747.5 243.5L754.5 244.5M759.5 256.5L765.5 257.5M728.5 249.5L735.5 250.5M740.5 262.5L746.5 263.5M778.5 207.5L785.5 208.5M790.5 220.5L796.5 221.5M759.5 213.5L766.5 214.5M771.5 226.5L777.5 227.5M778.5 252.5L785.5 253.5M790.5 265.5L796.5 266.5M759.5 258.5L766.5 259.5M771.5 271.5L777.5 272.5M810.5 216.5L817.5 217.5M822.5 229.5L828.5 230.5M790.5 222.5L797.5 223.5M802.5 235.5L808.5 236.5M810.5 261.5L817.5 262.5M822.5 274.5L828.5 275.5M790.5 267.5L797.5 268.5M802.5 280.5L808.5 281.5M841.5 225.5L848.5 226.5M853.5 238.5L859.5 239.5M822.5 231.5L829.5 232.5M834.5 244.5L840.5 245.5M841.5 270.5L848.5 271.5M853.5 283.5L859.5 284.5M822.5 276.5L829.5 277.5M834.5 289.5L840.5 290.5M872.5 234.5L879.5 235.5M884.5 247.5L890.5 248.5M853.5 240.5L860.5 241.5M865.5 253.5L871.5 254.5M872.5 279.5L879.5 280.5M884.5 292.5L890.5 293.5M853.5 285.5L860.5 286.5M865.5 298.5L871.5 299.5M904.5 243.5L911.5 244.5M916.5 256.5L922.5 257.5M885.5 249.5L892.5 250.5M897.5 262.5L903.5 263.5M904.5 288.5L911.5 289.5M916.5 301.5L922.5 302.5M885.5 294.5L892.5 295.5M897.5 307.5L903.5 308.5M935.5 252.5L942.5 253.5M947.5 265.5L953.5 266.5M916.5 258.5L923.5 259.5M928.5 271.5L934.5 272.5M935.5 297.5L942.5 298.5M947.5 310.5L953.5 311.5M916.5 303.5L923.5 304.5M928.5 316.5L934.5 317.5M76.5 668.5L82.5 670.5M79.5 655.5L85.5 657.5M95.5 662.5L101.5 664.5M98.5 649.5L104.5 651.5M115.5 668.5L121.5 670.5M118.5 655.5L124.5 657.5M96.5 674.5L102.5 676.5M99.5 661.5L105.5 663.5M76.5 636.5L82.5 638.5M79.5 623.5L85.5 625.5M95.5 630.5L101.5 632.5M98.5 617.5L104.5 619.5M115.5 636.5L121.5 638.5M118.5 623.5L124.5 625.5M96.5 642.5L102.5 644.5M99.5 629.5L105.5 631.5M76.5 604.5L82.5 606.5M79.5 591.5L85.5 593.5M95.5 598.5L101.5 600.5M98.5 585.5L104.5 587.5M115.5 604.5L121.5 606.5M118.5 591.5L124.5 593.5M96.5 610.5L102.5 612.5M99.5 597.5L105.5 599.5M76.5 572.5L82.5 574.5M79.5 559.5L85.5 561.5M95.5 566.5L101.5 568.5M98.5 553.5L104.5 555.5M115.5 572.5L121.5 574.5M118.5 559.5L124.5 561.5M96.5 578.5L102.5 580.5M99.5 565.5L105.5 567.5M76.5 540.5L82.5 542.5M79.5 527.5L85.5 529.5M95.5 534.5L101.5 536.5M98.5 521.5L104.5 523.5M115.5 540.5L121.5 542.5M118.5 527.5L124.5 529.5M96.5 546.5L102.5 548.5M99.5 533.5L105.5 535.5M76.5 508.5L82.5 510.5M79.5 495.5L85.5 497.5M95.5 502.5L101.5 504.5M98.5 489.5L104.5 491.5M115.5 508.5L121.5 510.5M118.5 495.5L124.5 497.5M96.5 514.5L102.5 516.5M99.5 501.5L105.5 503.5M76.5 477.5L82.5 479.5M79.5 464.5L85.5 466.5M95.5 470.5L101.5 472.5M98.5 457.5L104.5 459.5M115.5 476.5L121.5 478.5M118.5 463.5L124.5 465.5M96.5 482.5L102.5 484.5M99.5 469.5L105.5 471.5M76.5 445.5L82.5 447.5M79.5 432.5L85.5 434.5M95.5 438.5L101.5 440.5M98.5 425.5L104.5 427.5M115.5 444.5L121.5 446.5M118.5 431.5L124.5 433.5M96.5 451.5L102.5 453.5M99.5 438.5L105.5 440.5M76.5 413.5L82.5 415.5M79.5 400.5L85.5 402.5M95.5 406.5L101.5 408.5M98.5 393.5L104.5 395.5M115.5 412.5L121.5 414.5M118.5 399.5L124.5 401.5M96.5 419.5L102.5 421.5M99.5 406.5L105.5 408.5M76.5 381.5L82.5 383.5M79.5 368.5L85.5 370.5M95.5 375.5L101.5 377.5M98.5 362.5L104.5 364.5M115.5 380.5L121.5 382.5M118.5 367.5L124.5 369.5M96.5 387.5L102.5 389.5M99.5 374.5L105.5 376.5M76.5 349.5L82.5 351.5M79.5 336.5L85.5 338.5M95.5 343.5L101.5 345.5M98.5 330.5L104.5 332.5M115.5 348.5L121.5 350.5M118.5 335.5L124.5 337.5M96.5 355.5L102.5 357.5M99.5 342.5L105.5 344.5M76.5 304.5L82.5 306.5M79.5 291.5L85.5 293.5M95.5 298.5L101.5 300.5M98.5 285.5L104.5 287.5M115.5 304.5L121.5 306.5M118.5 291.5L124.5 293.5M96.5 310.5L102.5 312.5M99.5 297.5L105.5 299.5M533.5 518.5L539.5 520.5M536.5 505.5L542.5 507.5M552.5 511.5L558.5 513.5M555.5 498.5L561.5 500.5M572.5 517.5L578.5 519.5M575.5 504.5L581.5 506.5M553.5 523.5L559.5 525.5M556.5 510.5L562.5 512.5M533.5 486.5L539.5 488.5M536.5 473.5L542.5 475.5M552.5 479.5L558.5 481.5M555.5 466.5L561.5 468.5M572.5 485.5L578.5 487.5M575.5 472.5L581.5 474.5M553.5 492.5L559.5 494.5M556.5 479.5L562.5 481.5M533.5 454.5L539.5 456.5M536.5 441.5L542.5 443.5M552.5 447.5L558.5 449.5M555.5 434.5L561.5 436.5M572.5 453.5L578.5 455.5M575.5 440.5L581.5 442.5M553.5 460.5L559.5 462.5M556.5 447.5L562.5 449.5M533.5 422.5L539.5 424.5M536.5 409.5L542.5 411.5M552.5 416.5L558.5 418.5M555.5 403.5L561.5 405.5M572.5 421.5L578.5 423.5M575.5 408.5L581.5 410.5M553.5 428.5L559.5 430.5M556.5 415.5L562.5 417.5M533.5 390.5L539.5 392.5M536.5 377.5L542.5 379.5M552.5 384.5L558.5 386.5M555.5 371.5L561.5 373.5M572.5 390.5L578.5 392.5M575.5 377.5L581.5 379.5M553.5 396.5L559.5 398.5M556.5 383.5L562.5 385.5M533.5 358.5L539.5 360.5M536.5 345.5L542.5 347.5M552.5 352.5L558.5 354.5M555.5 339.5L561.5 341.5M572.5 358.5L578.5 360.5M575.5 345.5L581.5 347.5M553.5 364.5L559.5 366.5M556.5 351.5L562.5 353.5M533.5 326.5L539.5 328.5M536.5 313.5L542.5 315.5M552.5 320.5L558.5 322.5M555.5 307.5L561.5 309.5M572.5 326.5L578.5 328.5M575.5 313.5L581.5 315.5M553.5 332.5L559.5 334.5M556.5 319.5L562.5 321.5M533.5 294.5L539.5 296.5M536.5 281.5L542.5 283.5M552.5 288.5L558.5 290.5M555.5 275.5L561.5 277.5M572.5 294.5L578.5 296.5M575.5 281.5L581.5 283.5M553.5 300.5L559.5 302.5M556.5 287.5L562.5 289.5M533.5 262.5L539.5 264.5M536.5 249.5L542.5 251.5M552.5 256.5L558.5 258.5M555.5 243.5L561.5 245.5M572.5 262.5L578.5 264.5M575.5 249.5L581.5 251.5M553.5 268.5L559.5 270.5M556.5 255.5L562.5 257.5M533.5 231.5L539.5 233.5M536.5 218.5L542.5 220.5M552.5 224.5L558.5 226.5M555.5 211.5L561.5 213.5M572.5 230.5L578.5 232.5M575.5 217.5L581.5 219.5M553.5 236.5L559.5 238.5M556.5 223.5L562.5 225.5M533.5 199.5L539.5 201.5M536.5 186.5L542.5 188.5M552.5 192.5L558.5 194.5M555.5 179.5L561.5 181.5M572.5 198.5L578.5 200.5M575.5 185.5L581.5 187.5M553.5 204.5L559.5 206.5M556.5 191.5L562.5 193.5M533.5 154.5L539.5 156.5M536.5 141.5L542.5 143.5M552.5 147.5L558.5 149.5M555.5 134.5L561.5 136.5M572.5 153.5L578.5 155.5M575.5 140.5L581.5 142.5M553.5 159.5L559.5 161.5M556.5 146.5L562.5 148.5M929.5 632.5L935.5 634.5M932.5 619.5L938.5 621.5M948.5 626.5L954.5 628.5M951.5 613.5L957.5 615.5M968.5 632.5L974.5 634.5M971.5 619.5L977.5 621.5M949.5 638.5L955.5 640.5M952.5 625.5L958.5 627.5M929.5 601.5L935.5 603.5M932.5 588.5L938.5 590.5M948.5 594.5L954.5 596.5M951.5 581.5L957.5 583.5M968.5 600.5L974.5 602.5M971.5 587.5L977.5 589.5M949.5 606.5L955.5 608.5M952.5 593.5L958.5 595.5M929.5 569.5L935.5 571.5M932.5 556.5L938.5 558.5M948.5 562.5L954.5 564.5M951.5 549.5L957.5 551.5M968.5 568.5L974.5 570.5M971.5 555.5L977.5 557.5M949.5 574.5L955.5 576.5M952.5 561.5L958.5 563.5M929.5 537.5L935.5 539.5M932.5 524.5L938.5 526.5M948.5 530.5L954.5 532.5M951.5 517.5L957.5 519.5M968.5 536.5L974.5 538.5M971.5 523.5L977.5 525.5M949.5 543.5L955.5 545.5M952.5 530.5L958.5 532.5M929.5 505.5L935.5 507.5M932.5 492.5L938.5 494.5M948.5 498.5L954.5 500.5M951.5 485.5L957.5 487.5M968.5 504.5L974.5 506.5M971.5 491.5L977.5 493.5M949.5 511.5L955.5 513.5M952.5 498.5L958.5 500.5M929.5 473.5L935.5 475.5M932.5 460.5L938.5 462.5M948.5 467.5L954.5 469.5M951.5 454.5L957.5 456.5M968.5 472.5L974.5 474.5M971.5 459.5L977.5 461.5M949.5 479.5L955.5 481.5M952.5 466.5L958.5 468.5M929.5 441.5L935.5 443.5M932.5 428.5L938.5 430.5M948.5 435.5L954.5 437.5M951.5 422.5L957.5 424.5M968.5 441.5L974.5 443.5M971.5 428.5L977.5 430.5M949.5 447.5L955.5 449.5M952.5 434.5L958.5 436.5M929.5 409.5L935.5 411.5M932.5 396.5L938.5 398.5M948.5 403.5L954.5 405.5M951.5 390.5L957.5 392.5M968.5 409.5L974.5 411.5M971.5 396.5L977.5 398.5M949.5 415.5L955.5 417.5M952.5 402.5L958.5 404.5M929.5 377.5L935.5 379.5M932.5 364.5L938.5 366.5M948.5 371.5L954.5 373.5M951.5 358.5L957.5 360.5M968.5 377.5L974.5 379.5M971.5 364.5L977.5 366.5M949.5 383.5L955.5 385.5M952.5 370.5L958.5 372.5M929.5 345.5L935.5 347.5M932.5 332.5L938.5 334.5M948.5 339.5L954.5 341.5M951.5 326.5L957.5 328.5M968.5 345.5L974.5 347.5M971.5 332.5L977.5 334.5M949.5 351.5L955.5 353.5M952.5 338.5L958.5 340.5M929.5 313.5L935.5 315.5M932.5 300.5L938.5 302.5M948.5 307.5L954.5 309.5M951.5 294.5L957.5 296.5M968.5 313.5L974.5 315.5M971.5 300.5L977.5 302.5M949.5 319.5L955.5 321.5M952.5 306.5L958.5 308.5M929.5 268.5L935.5 270.5M932.5 255.5L938.5 257.5M948.5 262.5L954.5 264.5M951.5 249.5L957.5 251.5M968.5 268.5L974.5 270.5M971.5 255.5L977.5 257.5M949.5 274.5L955.5 276.5M952.5 261.5L958.5 263.5" stroke="#0020ff" stroke-width="1" fill="none"/><path d="M91.5 288.5h4v4h-4zM111.5 294.5h4v4h-4zM91.5 333.5h4v4h-4zM111.5 338.5h4v4h-4zM122.5 277.5h4v4h-4zM142.5 283.5h4v4h-4zM122.5 322.5h4v4h-4zM142.5 328.5h4v4h-4zM153.5 267.5h4v4h-4zM174.5 273.5h4v4h-4zM153.5 312.5h4v4h-4zM174.5 318.5h4v4h-4zM185.5 257.5h4v4h-4zM205.5 263.5h4v4h-4zM185.5 302.5h4v4h-4zM205.5 308.5h4v4h-4zM216.5 247.5h4v4h-4zM236.5 252.5h4v4h-4zM216.5 292.5h4v4h-4zM236.5 297.5h4v4h-4zM247.5 236.5h4v4h-4zM267.5 242.5h4v4h-4zM247.5 281.5h4v4h-4zM267.5 287.5h4v4h-4zM278.5 226.5h4v4h-4zM299.5 232.5h4v4h-4zM278.5 271.5h4v4h-4zM299.5 277.5h4v4h-4zM310.5 216.5h4v4h-4zM330.5 221.5h4v4h-4zM310.5 261.5h4v4h-4zM330.5 266.5h4v4h-4zM341.5 205.5h4v4h-4zM361.5 211.5h4v4h-4zM341.5 250.5h4v4h-4zM361.5 256.5h4v4h-4zM372.5 195.5h4v4h-4zM392.5 201.5h4v4h-4zM372.5 240.5h4v4h-4zM392.5 246.5h4v4h-4zM403.5 185.5h4v4h-4zM424.5 191.5h4v4h-4zM403.5 230.5h4v4h-4zM424.5 236.5h4v4h-4zM435.5 174.5h4v4h-4zM455.5 180.5h4v4h-4zM435.5 219.5h4v4h-4zM455.5 225.5h4v4h-4zM466.5 164.5h4v4h-4zM486.5 170.5h4v4h-4zM466.5 209.5h4v4h-4zM486.5 215.5h4v4h-4zM497.5 154.5h4v4h-4zM517.5 160.5h4v4h-4zM497.5 199.5h4v4h-4zM517.5 205.5h4v4h-4zM529.5 144.5h4v4h-4zM549.5 149.5h4v4h-4zM529.5 189.5h4v4h-4zM549.5 194.5h4v4h-4zM568.5 143.5h4v4h-4zM549.5 149.5h4v4h-4zM568.5 188.5h4v4h-4zM549.5 194.5h4v4h-4zM599.5 152.5h4v4h-4zM580.5 159.5h4v4h-4zM599.5 197.5h4v4h-4zM580.5 204.5h4v4h-4zM631.5 161.5h4v4h-4zM611.5 168.5h4v4h-4zM631.5 206.5h4v4h-4zM611.5 213.5h4v4h-4zM662.5 170.5h4v4h-4zM643.5 177.5h4v4h-4zM662.5 215.5h4v4h-4zM643.5 222.5h4v4h-4zM693.5 179.5h4v4h-4zM674.5 186.5h4v4h-4zM693.5 224.5h4v4h-4zM674.5 231.5h4v4h-4zM725.5 189.5h4v4h-4zM705.5 195.5h4v4h-4zM725.5 234.5h4v4h-4zM705.5 240.5h4v4h-4zM756.5 198.5h4v4h-4zM737.5 204.5h4v4h-4zM756.5 243.5h4v4h-4zM737.5 249.5h4v4h-4zM787.5 207.5h4v4h-4zM768.5 213.5h4v4h-4zM787.5 252.5h4v4h-4zM768.5 258.5h4v4h-4zM819.5 216.5h4v4h-4zM799.5 222.5h4v4h-4zM819.5 261.5h4v4h-4zM799.5 267.5h4v4h-4zM850.5 225.5h4v4h-4zM831.5 231.5h4v4h-4zM850.5 270.5h4v4h-4zM831.5 276.5h4v4h-4zM881.5 234.5h4v4h-4zM862.5 240.5h4v4h-4zM881.5 279.5h4v4h-4zM862.5 285.5h4v4h-4zM913.5 243.5h4v4h-4zM894.5 249.5h4v4h-4zM913.5 288.5h4v4h-4zM894.5 294.5h4v4h-4zM944.5 252.5h4v4h-4zM925.5 258.5h4v4h-4zM944.5 297.5h4v4h-4zM925.5 303.5h4v4h-4zM72.5 658.5h4v4h-4zM91.5 652.5h4v4h-4zM111.5 658.5h4v4h-4zM92.5 664.5h4v4h-4zM72.5 626.5h4v4h-4zM91.5 620.5h4v4h-4zM111.5 626.5h4v4h-4zM92.5 632.5h4v4h-4zM72.5 594.5h4v4h-4zM91.5 588.5h4v4h-4zM111.5 594.5h4v4h-4zM92.5 600.5h4v4h-4zM72.5 562.5h4v4h-4zM91.5 556.5h4v4h-4zM111.5 562.5h4v4h-4zM92.5 568.5h4v4h-4zM72.5 530.5h4v4h-4zM91.5 524.5h4v4h-4zM111.5 530.5h4v4h-4zM92.5 536.5h4v4h-4zM72.5 498.5h4v4h-4zM91.5 492.5h4v4h-4zM111.5 498.5h4v4h-4zM92.5 504.5h4v4h-4zM72.5 467.5h4v4h-4zM91.5 460.5h4v4h-4zM111.5 466.5h4v4h-4zM92.5 472.5h4v4h-4zM72.5 435.5h4v4h-4zM91.5 428.5h4v4h-4zM111.5 434.5h4v4h-4zM92.5 441.5h4v4h-4zM72.5 403.5h4v4h-4zM91.5 396.5h4v4h-4zM111.5 402.5h4v4h-4zM92.5 409.5h4v4h-4zM72.5 371.5h4v4h-4zM91.5 365.5h4v4h-4zM111.5 370.5h4v4h-4zM92.5 377.5h4v4h-4zM72.5 339.5h4v4h-4zM91.5 333.5h4v4h-4zM111.5 338.5h4v4h-4zM92.5 345.5h4v4h-4zM72.5 294.5h4v4h-4zM91.5 288.5h4v4h-4zM111.5 294.5h4v4h-4zM92.5 300.5h4v4h-4zM529.5 508.5h4v4h-4zM548.5 501.5h4v4h-4zM568.5 507.5h4v4h-4zM549.5 513.5h4v4h-4zM529.5 476.5h4v4h-4zM548.5 469.5h4v4h-4zM568.5 475.5h4v4h-4zM549.5 482.5h4v4h-4zM529.5 444.5h4v4h-4zM548.5 437.5h4v4h-4zM568.5 443.5h4v4h-4zM549.5 450.5h4v4h-4zM529.5 412.5h4v4h-4zM548.5 406.5h4v4h-4zM568.5 411.5h4v4h-4zM549.5 418.5h4v4h-4zM529.5 380.5h4v4h-4zM548.5 374.5h4v4h-4zM568.5 380.5h4v4h-4zM549.5 386.5h4v4h-4zM529.5 348.5h4v4h-4zM548.5 342.5h4v4h-4zM568.5 348.5h4v4h-4zM549.5 354.5h4v4h-4zM529.5 316.5h4v4h-4zM548.5 310.5h4v4h-4zM568.5 316.5h4v4h-4zM549.5 322.5h4v4h-4zM529.5 284.5h4v4h-4zM548.5 278.5h4v4h-4zM568.5 284.5h4v4h-4zM549.5 290.5h4v4h-4zM529.5 252.5h4v4h-4zM548.5 246.5h4v4h-4zM568.5 252.5h4v4h-4zM549.5 258.5h4v4h-4zM529.5 221.5h4v4h-4zM548.5 214.5h4v4h-4zM568.5 220.5h4v4h-4zM549.5 226.5h4v4h-4zM529.5 189.5h4v4h-4zM548.5 182.5h4v4h-4zM568.5 188.5h4v4h-4zM549.5 194.5h4v4h-4zM529.5 144.5h4v4h-4zM548.5 137.5h4v4h-4zM568.5 143.5h4v4h-4zM549.5 149.5h4v4h-4zM925.5 622.5h4v4h-4zM944.5 616.5h4v4h-4zM964.5 622.5h4v4h-4zM945.5 628.5h4v4h-4zM925.5 591.5h4v4h-4zM944.5 584.5h4v4h-4zM964.5 590.5h4v4h-4zM945.5 596.5h4v4h-4zM925.5 559.5h4v4h-4zM944.5 552.5h4v4h-4zM964.5 558.5h4v4h-4zM945.5 564.5h4v4h-4zM925.5 527.5h4v4h-4zM944.5 520.5h4v4h-4zM964.5 526.5h4v4h-4zM945.5 533.5h4v4h-4zM925.5 495.5h4v4h-4zM944.5 488.5h4v4h-4zM964.5 494.5h4v4h-4zM945.5 501.5h4v4h-4zM925.5 463.5h4v4h-4zM944.5 457.5h4v4h-4zM964.5 462.5h4v4h-4zM945.5 469.5h4v4h-4zM925.5 431.5h4v4h-4zM944.5 425.5h4v4h-4zM964.5 431.5h4v4h-4zM945.5 437.5h4v4h-4zM925.5 399.5h4v4h-4zM944.5 393.5h4v4h-4zM964.5 399.5h4v4h-4zM945.5 405.5h4v4h-4zM925.5 367.5h4v4h-4zM944.5 361.5h4v4h-4zM964.5 367.5h4v4h-4zM945.5 373.5h4v4h-4zM925.5 335.5h4v4h-4zM944.5 329.5h4v4h-4zM964.5 335.5h4v4h-4zM945.5 341.5h4v4h-4zM925.5 303.5h4v4h-4zM944.5 297.5h4v4h-4zM964.5 303.5h4v4h-4zM945.5 309.5h4v4h-4zM925.5 258.5h4v4h-4zM944.5 252.5h4v4h-4zM964.5 258.5h4v4h-4zM945.5 264.5h4v4h-4z" stroke="#1a64c8" stroke-width="1" fill="none"/><path d="M48.5 652V666" stroke="#00c000" fill="none"/><path d="M48.5 666L57 663" stroke="#0000e0" fill="none"/><path d="M48.5 666L60 670" stroke="#e00000" fill="none"/><path d="M61 669l4 4M65 669l-4 4" stroke="#e00000" fill="none"/><text x="45" y="651" font-size="8" font-family="Liberation Sans" fill="#00c000">Z</text><text x="59" y="663" font-size="8" font-family="Liberation Sans" fill="#0000e0">Y</text></g></svg><div style="position:absolute;left:0;top:114px;width:18px;height:584px;background:linear-gradient(90deg,#a09e94 0px,#a09e94 1px,#f3f1ea 1px,#f3f1ea 6px,#fdfdf6 11px,#fefef8 16px,#eeede4 17px)"></div><div style="position:absolute;left:3px;top:115px;width:12px;height:13px;border:1px solid #b4c8f6;border-radius:2px;background:linear-gradient(135deg,#dbe6fd,#c6d6fb 50%,#b8cbf9)"></div><svg style="position:absolute;left:3px;top:115px" width="14" height="15" viewBox="0 0 15 15"><path d="M3 9.5L7.5 5L12 9.5" stroke="#4d6185" stroke-width="2.2" fill="none"/></svg><div style="position:absolute;left:3px;top:681px;width:12px;height:13px;border:1px solid #b4c8f6;border-radius:2px;background:linear-gradient(135deg,#dbe6fd,#c6d6fb 50%,#b8cbf9)"></div><svg style="position:absolute;left:3px;top:681px" width="14" height="15" viewBox="0 0 15 15"><path d="M3 5.5L7.5 10L12 5.5" stroke="#4d6185" stroke-width="2.2" fill="none"/></svg><div style="position:absolute;left:3px;top:377px;width:12px;height:24px;border:1px solid #b4c8f6;border-radius:2px;background:linear-gradient(90deg,#c8d8fc,#bccffa)"></div><svg style="position:absolute;left:6px;top:385px" width="8" height="9"><path d="M0 1.5h7M0 3.5h7M0 5.5h7M0 7.5h7" stroke="#8faaf0" stroke-width="1"/></svg><div style="position:absolute;left:789px;top:126px;width:209px;height:455px;background:#00138c;border-radius:3px 3px 0 0"></div><div style="position:absolute;left:790px;top:127px;width:207px;height:453px;background:#0b50ee"></div><div style="position:absolute;left:789px;top:126px;width:209px;height:20px;background:linear-gradient(#5a9cff 0px,#2a78f8 1.5px,#0a5ae8 4px,#0058e6 10px,#0064f4 14px,#006ef8 18px,#0058e0 19.2px,#0040c0 20px);border-radius:3px 3px 0 0"></div><div style="position:absolute;left:792px;top:146px;width:203px;height:431px;background:#ece9d8"></div><div style="position:absolute;left:792px;top:132px;font-size:11.5px;font-weight:bold;font-family:'Liberation Sans',sans-serif;color:#fff;white-space:nowrap;text-shadow:1px 1px 0 #0a2a8a">Force diagrams</div><div style="position:absolute;left:947px;top:131px;width:11px;height:11px;border:1px solid #fff;border-radius:2px;background:linear-gradient(#5a90ff,#1a56e0)"><svg width="11" height="11" style="position:absolute;left:0;top:0"><rect x="1.5" y="2" width="7" height="6" fill="#101010"/><rect x="3" y="3" width="3" height="3" fill="#fff"/><rect x="6" y="5" width="4" height="4" fill="#10a0a0" stroke="#000" stroke-width="0.8"/></svg></div><div style="position:absolute;left:962px;top:131px;width:11px;height:11px;border:1px solid #fff;border-radius:2px;background:linear-gradient(#5a90ff,#1a56e0)"><div style="position:absolute;left:0;top:-1px;width:11px;text-align:center;font-size:10px;font-weight:bold;font-family:'Liberation Sans',sans-serif;color:#fff">?</div></div><div style="position:absolute;left:980px;top:131px;width:11px;height:11px;border:1px solid #fff;border-radius:2px;background:linear-gradient(#f08a6a,#d84a1a)"><svg width="11" height="11" style="position:absolute;left:0;top:0"><path d="M2.5 2.5L8.5 8.5M8.5 2.5L2.5 8.5" stroke="#fff" stroke-width="1.8"/></svg></div><div style="position:absolute;left:829px;top:151px;width:11px;height:11px;border:1px solid #1c5180;background:linear-gradient(135deg,#dcdcd7,#f5f5f2 70%,#fff)"></div><div style="position:absolute;left:845px;top:151px;font-size:11px;font-family:'Liberation Sans',sans-serif;color:#000;white-space:nowrap;letter-spacing:-0.25px">Axial (N)</div><div style="position:absolute;left:829px;top:173px;width:11px;height:11px;border:1px solid #1c5180;background:linear-gradient(135deg,#dcdcd7,#f5f5f2 70%,#fff)"></div><div style="position:absolute;left:845px;top:173px;font-size:11px;font-family:'Liberation Sans',sans-serif;color:#000;white-space:nowrap;letter-spacing:-0.25px">Shear y (Vy)</div><div style="position:absolute;left:829px;top:195px;width:11px;height:11px;border:1px solid #1c5180;background:linear-gradient(135deg,#dcdcd7,#f5f5f2 70%,#fff)"></div><div style="position:absolute;left:845px;top:195px;font-size:11px;font-family:'Liberation Sans',sans-serif;color:#000;white-space:nowrap;letter-spacing:-0.25px">Shear z (Vz)</div><div style="position:absolute;left:829px;top:217px;width:11px;height:11px;border:1px solid #1c5180;background:linear-gradient(135deg,#dcdcd7,#f5f5f2 70%,#fff)"></div><div style="position:absolute;left:845px;top:217px;font-size:11px;font-family:'Liberation Sans',sans-serif;color:#000;white-space:nowrap;letter-spacing:-0.25px">Torsional moment (Mx)</div><div style="position:absolute;left:829px;top:239px;width:11px;height:11px;border:1px solid #1c5180;background:linear-gradient(135deg,#dcdcd7,#f5f5f2 70%,#fff)"></div><div style="position:absolute;left:845px;top:239px;font-size:11px;font-family:'Liberation Sans',sans-serif;color:#000;white-space:nowrap;letter-spacing:-0.25px">Moment y (My)</div><div style="position:absolute;left:829px;top:261px;width:11px;height:11px;border:1px solid #1c5180;background:linear-gradient(135deg,#dcdcd7,#f5f5f2 70%,#fff)"></div><div style="position:absolute;left:845px;top:261px;font-size:11px;font-family:'Liberation Sans',sans-serif;color:#000;white-space:nowrap;letter-spacing:-0.25px">Moment z (Mz)</div><div style="position:absolute;left:829px;top:283px;width:11px;height:11px;border:1px solid #1c5180;background:linear-gradient(135deg,#dcdcd7,#f5f5f2 70%,#fff)"></div><svg style="position:absolute;left:829px;top:283px" width="13" height="13"><path d="M3.5 6L5.5 8.5L9.5 3.5" stroke="#21a121" stroke-width="2" fill="none"/></svg><div style="position:absolute;left:845px;top:283px;font-size:11px;font-family:'Liberation Sans',sans-serif;color:#000;white-space:nowrap;letter-spacing:-0.25px">Deformed shape (D)</div><div style="position:absolute;left:829px;top:305px;width:11px;height:11px;border:1px solid #1c5180;background:linear-gradient(135deg,#dcdcd7,#f5f5f2 70%,#fff)"></div><div style="position:absolute;left:845px;top:305px;font-size:11px;font-family:'Liberation Sans',sans-serif;color:#000;white-space:nowrap;letter-spacing:-0.25px">Deflection xy (Fxy)</div><div style="position:absolute;left:829px;top:327px;width:11px;height:11px;border:1px solid #1c5180;background:linear-gradient(135deg,#dcdcd7,#f5f5f2 70%,#fff)"></div><div style="position:absolute;left:845px;top:327px;font-size:11px;font-family:'Liberation Sans',sans-serif;color:#000;white-space:nowrap;letter-spacing:-0.25px">Deflection xz (Fxz)</div><div style="position:absolute;left:829px;top:349px;width:11px;height:11px;border:1px solid #1c5180;background:linear-gradient(135deg,#dcdcd7,#f5f5f2 70%,#fff)"></div><div style="position:absolute;left:845px;top:349px;font-size:11px;font-family:'Liberation Sans',sans-serif;color:#000;white-space:nowrap;letter-spacing:-0.25px">Deflection (F)</div><div style="position:absolute;left:810px;top:284px;width:13px;height:13px;background:#ff3c00"></div><div style="position:absolute;left:796px;top:371px;width:193px;height:18px;border:1px solid #003c74;border-radius:3px;background:linear-gradient(#ffffff,#f0f0ea 70%,#d8d6cb);box-shadow:inset 0 -1px 0 #d6d0c4"></div><div style="position:absolute;left:796px;top:374px;width:195px;text-align:center;font-size:11px;font-family:'Liberation Sans',sans-serif;color:#000;white-space:nowrap;letter-spacing:-0.2px">Scales</div><div style="position:absolute;left:793px;top:398px;width:201px;height:1px;background:#aca899"></div><div style="position:absolute;left:793px;top:399px;width:201px;height:1px;background:#fff"></div><div style="position:absolute;left:793px;top:472px;width:201px;height:1px;background:#aca899"></div><div style="position:absolute;left:793px;top:473px;width:201px;height:1px;background:#fff"></div><div style="position:absolute;left:793px;top:524px;width:201px;height:1px;background:#aca899"></div><div style="position:absolute;left:793px;top:525px;width:201px;height:1px;background:#fff"></div><div style="position:absolute;left:795px;top:408px;width:11px;height:11px;border:1px solid #1c5180;background:linear-gradient(135deg,#dcdcd7,#f5f5f2 70%,#fff)"></div><div style="position:absolute;left:811px;top:408px;font-size:11px;font-family:'Liberation Sans',sans-serif;color:#000;white-space:nowrap;letter-spacing:-0.35px">Axes in the window plane</div><div style="position:absolute;left:795px;top:430px;width:11px;height:11px;border:1px solid #1c5180;background:linear-gradient(135deg,#dcdcd7,#f5f5f2 70%,#fff)"></div><div style="position:absolute;left:811px;top:430px;font-size:11px;font-family:'Liberation Sans',sans-serif;color:#000;white-space:nowrap;letter-spacing:-0.35px">Dibujar maximum and minimum values</div><div style="position:absolute;left:795px;top:452px;width:11px;height:11px;border:1px solid #1c5180;background:linear-gradient(135deg,#dcdcd7,#f5f5f2 70%,#fff)"></div><div style="position:absolute;left:811px;top:452px;font-size:11px;font-family:'Liberation Sans',sans-serif;color:#000;white-space:nowrap;letter-spacing:-0.35px">View maximum and minimum values</div><div style="position:absolute;left:795px;top:482px;width:11px;height:11px;border:1px solid #1c5180;border-radius:50%;background:linear-gradient(135deg,#dcdcd7,#fff)"></div><div style="position:absolute;left:799px;top:486px;width:5px;height:5px;border-radius:50%;background:radial-gradient(#62d262,#21a121)"></div><div style="position:absolute;left:811px;top:482px;font-size:11px;font-family:'Liberation Sans',sans-serif;color:#000;white-space:nowrap;letter-spacing:-0.3px">All bars</div><div style="position:absolute;left:795px;top:504px;width:11px;height:11px;border:1px solid #1c5180;border-radius:50%;background:linear-gradient(135deg,#dcdcd7,#fff)"></div><div style="position:absolute;left:811px;top:504px;font-size:11px;font-family:'Liberation Sans',sans-serif;color:#000;white-space:nowrap;letter-spacing:-0.3px">Selected bars only</div><div style="position:absolute;left:795px;top:533px;font-size:11px;font-weight:bold;font-family:'Liberation Sans',sans-serif;color:#000;white-space:nowrap;letter-spacing:0.45px">Selected comb.:</div><div style="position:absolute;left:796px;top:554px;width:193px;height:18px;border:1px solid #003c74;border-radius:3px;background:linear-gradient(#ffffff,#f0f0ea 70%,#d8d6cb);box-shadow:inset 0 -1px 0 #d6d0c4"></div><div style="position:absolute;left:796px;top:557px;width:195px;text-align:center;font-size:11px;font-family:'Liberation Sans',sans-serif;color:#000;white-space:nowrap;letter-spacing:-0.2px">Dead load</div><div style="position:absolute;left:0;top:698px;width:1024px;height:16px;background:#ece9d8"></div><svg style="position:absolute;left:0;top:690px" width="1024" height="24" viewBox="0 690 1024 24" shape-rendering="crispEdges"><path d="M0 698.5H1024" stroke="#000" stroke-width="1"/><path d="M0 698L13.5 711.5H64L76 698z" fill="#fff"/><path d="M0.5 698.5L13.5 711.5H64L76.5 698.5" stroke="#000" fill="none" stroke-width="1"/><path d="M76 698.5L71 704.5L77 711.5H142L153.5 698.5" stroke="#000" fill="#ece9d8" stroke-width="1"/><path d="M153 712.5H1024" stroke="#aca899" stroke-width="1"/><path d="M0 713.5H1024" stroke="#fbfaf5" stroke-width="1"/></svg><div style="position:absolute;left:17px;top:699px;font-size:11px;font-family:'Liberation Sans',sans-serif;color:#000;white-space:nowrap;letter-spacing:-0.2px">Structure</div><div style="position:absolute;left:80px;top:699px;font-size:11px;font-family:'Liberation Sans',sans-serif;color:#000;white-space:nowrap;letter-spacing:-0.27px">Foundations</div><div style="position:absolute;left:0;top:714px;width:1024px;height:20px;background:#ece9d8"></div><div style="position:absolute;left:1px;top:715px;width:877px;height:17px;border-top:1px solid #aca899;border-left:1px solid #aca899;border-bottom:1px solid #fff;border-right:1px solid #fff"></div><div style="position:absolute;left:883px;top:715px;width:138px;height:17px;border-top:1px solid #aca899;border-left:1px solid #aca899;border-bottom:1px solid #fff;border-right:1px solid #fff"></div><svg style="position:absolute;left:3px;top:716px" width="18" height="17" viewBox="0 0 18 17"><path d="M1 8L9 1L17 5L9 12z" fill="#8a1aa0" stroke="#000" stroke-width="1"/><path d="M1 8v4l8 4l8-7V5L9 12z" fill="#fff" stroke="#000" stroke-width="1"/><path d="M9 12v4" stroke="#000"/><text x="6.5" y="9" font-size="7" font-family="Liberation Sans" font-weight="bold" fill="#ff0">?</text></svg><div style="position:absolute;left:23px;top:718px;font-size:11px;font-family:'Liberation Sans',sans-serif;color:#000;white-space:nowrap;letter-spacing:-0.3px">Analysis - Force diagrams</div><div style="position:absolute;left:0;top:734px;width:1024px;height:4px;background:linear-gradient(#3a7cf0,#1e5ede)"></div></body></html>
